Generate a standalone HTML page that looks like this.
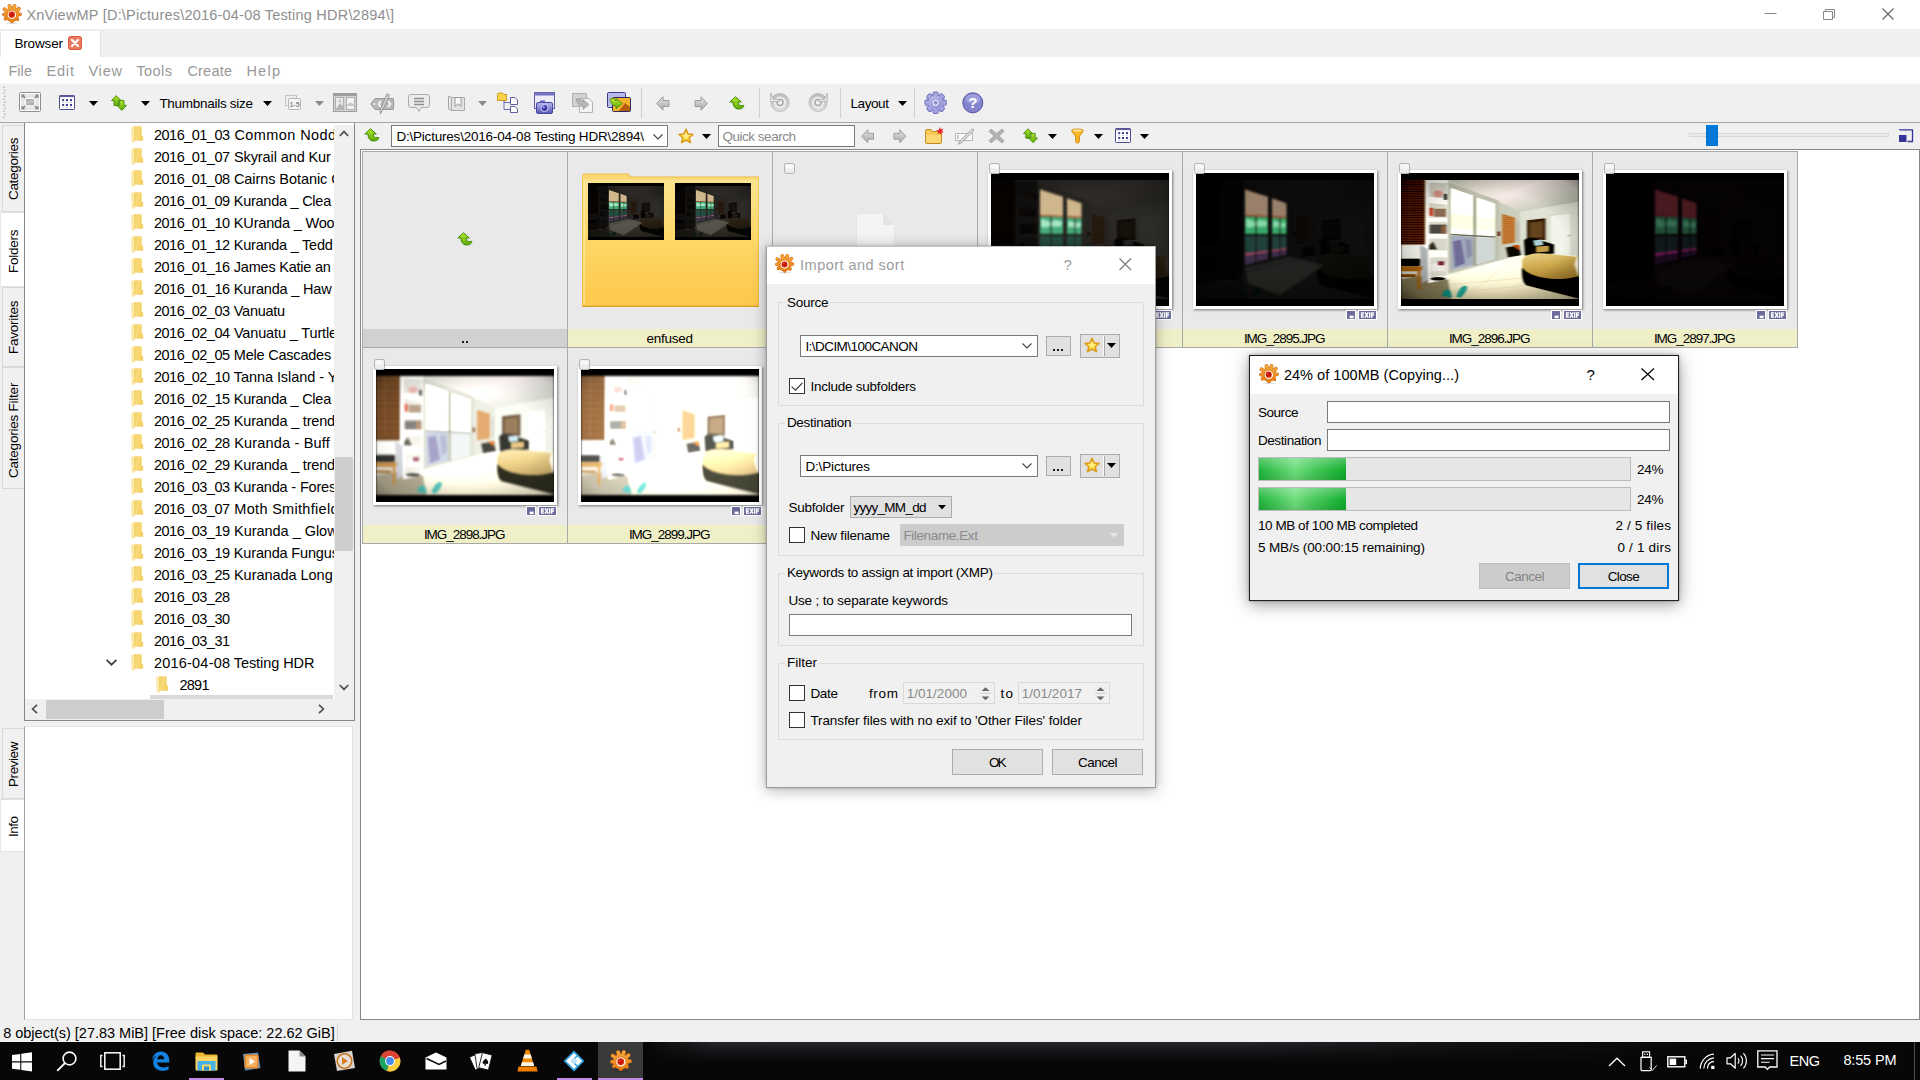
<!DOCTYPE html>
<html><head><meta charset="utf-8"><title>XnViewMP</title>
<style>
*{box-sizing:border-box;margin:0;padding:0}
html,body{width:1920px;height:1080px;overflow:hidden}
body{position:relative;background:#f0f0f0;font-family:"Liberation Sans",sans-serif;font-size:13.5px;color:#000}
.a{position:absolute}
.t{position:absolute;white-space:nowrap;line-height:1}
svg{position:absolute;overflow:visible}
.vt{position:absolute;white-space:nowrap;line-height:1;transform-origin:0 0;transform:rotate(-90deg)}

</style></head>
<body>
<svg width="0" height="0" style="position:absolute">
<defs>
<linearGradient id="gOr" gradientUnits="userSpaceOnUse" x1="0" y1="1" x2="0" y2="19"><stop offset="0" stop-color="#f8a83e"/><stop offset="1" stop-color="#e67a12"/></linearGradient>
<linearGradient id="gGr" x1="0" y1="0" x2="0" y2="1"><stop offset="0" stop-color="#b4e62e"/><stop offset="1" stop-color="#5fa80a"/></linearGradient>
<linearGradient id="gSt" x1="0" y1="0" x2="0" y2="1"><stop offset="0" stop-color="#fff27a"/><stop offset="1" stop-color="#f6b51d"/></linearGradient>
<linearGradient id="gFo" x1="0" y1="0" x2="1" y2="0.3"><stop offset="0" stop-color="#f3ce5e"/><stop offset="0.5" stop-color="#f8d977"/><stop offset="1" stop-color="#f4cf62"/></linearGradient>
<linearGradient id="gGy" x1="0" y1="0" x2="0" y2="1"><stop offset="0" stop-color="#e4e4e4"/><stop offset="1" stop-color="#a9a9a9"/></linearGradient>
<linearGradient id="gBl" x1="0" y1="0" x2="0" y2="1"><stop offset="0" stop-color="#b9b9ee"/><stop offset="1" stop-color="#5656b8"/></linearGradient>
<radialGradient id="gGear" cx="0.4" cy="0.3" r="0.8"><stop offset="0" stop-color="#c9c9f2"/><stop offset="1" stop-color="#8c8cd2"/></radialGradient>
<linearGradient id="gRot" x1="0" y1="0" x2="0" y2="1"><stop offset="0" stop-color="#bdbdbd"/><stop offset="1" stop-color="#dcdcdc"/></linearGradient>
<radialGradient id="gSt2" cx="0.5" cy="0.42" r="0.6"><stop offset="0" stop-color="#fff59a"/><stop offset="0.6" stop-color="#fde04e"/><stop offset="1" stop-color="#f8b827"/></radialGradient>
<radialGradient id="gEye" cx="0.45" cy="0.45" r="0.6"><stop offset="0" stop-color="#b80c04"/><stop offset="0.7" stop-color="#d42010"/><stop offset="1" stop-color="#ea4a18"/></radialGradient>
<linearGradient id="gGy2" x1="0" y1="0" x2="0.3" y2="1"><stop offset="0" stop-color="#9a9a9a"/><stop offset="0.5" stop-color="#c4c4c4"/><stop offset="1" stop-color="#a8a8a8"/></linearGradient>
<!-- XnView logo 20x20 -->
<symbol id="xn" viewBox="0 0 20 20">
 <ellipse cx="10" cy="19.2" rx="6.5" ry="0.8" fill="#000" opacity="0.13"/>
 <g stroke="#c86006" fill="none"><path d="M5.85 7.66L2.50 5.22" stroke-width="3.70" stroke-linecap="round"/><path d="M8.52 5.79L7.47 2.14" stroke-width="3.80" stroke-linecap="round"/><path d="M11.36 5.82L12.53 1.99" stroke-width="3.80" stroke-linecap="round"/><path d="M13.73 7.39L16.83 4.78" stroke-width="3.70" stroke-linecap="round"/><path d="M14.90 10.43L18.10 10.31" stroke-width="3.60" stroke-linecap="round"/><path d="M13.73 13.81L15.49 15.29" stroke-width="3.40" stroke-linecap="round"/><path d="M9.90 15.60L9.90 17.50" stroke-width="3.40" stroke-linecap="round"/><path d="M5.71 13.32L3.44 14.79" stroke-width="3.40" stroke-linecap="round"/><path d="M4.90 10.60L1.90 10.60" stroke-width="3.60" stroke-linecap="round"/></g>
 <circle cx="9.9" cy="10.6" r="7.2" fill="#c86006"/>
 <g stroke="url(#gOr)" fill="none"><path d="M5.85 7.66L2.50 5.22" stroke-width="2.90" stroke-linecap="round"/><path d="M8.52 5.79L7.47 2.14" stroke-width="3.00" stroke-linecap="round"/><path d="M11.36 5.82L12.53 1.99" stroke-width="3.00" stroke-linecap="round"/><path d="M13.73 7.39L16.83 4.78" stroke-width="2.90" stroke-linecap="round"/><path d="M14.90 10.43L18.10 10.31" stroke-width="2.80" stroke-linecap="round"/><path d="M13.73 13.81L15.49 15.29" stroke-width="2.60" stroke-linecap="round"/><path d="M9.90 15.60L9.90 17.50" stroke-width="2.60" stroke-linecap="round"/><path d="M5.71 13.32L3.44 14.79" stroke-width="2.60" stroke-linecap="round"/><path d="M4.90 10.60L1.90 10.60" stroke-width="2.80" stroke-linecap="round"/></g>
 <circle cx="9.9" cy="10.6" r="6.8" fill="url(#gOr)"/>
 <circle cx="9.9" cy="10.799999999999999" r="4.7" fill="#fff4e0" stroke="#d87412" stroke-width="0.8"/>
 <circle cx="9.8" cy="10.7" r="3.1" fill="url(#gEye)"/>
 <circle cx="9.0" cy="9.9" r="0.8" fill="#f26a4a" opacity="0.6"/>
</symbol>
<!-- dropdown arrow 9x5 -->
<symbol id="dd" viewBox="0 0 9 5"><path d="M0 0H9L4.5 5Z"/></symbol>
<!-- green up/down arrows 16x16 -->
<symbol id="gar" viewBox="0 0 16 16">
 <path d="M5.2 0.6L10 5.6H7.4V10.6H3V5.6H0.5Z" fill="url(#gGr)" stroke="#3d8a06" stroke-width="0.9" stroke-linejoin="round"/>
 <path d="M10.8 15.4L15.5 10.4H13V5.4H8.6V10.4H6Z" fill="url(#gGr)" stroke="#3d8a06" stroke-width="0.9" stroke-linejoin="round"/>
</symbol>
<!-- star 16x16 -->
<symbol id="star" viewBox="0 0 16 16">
 <path d="M8 1.2L10 5.9L15 6.4L11.2 9.7L12.4 14.6L8 12L3.6 14.6L4.8 9.7L1 6.4L6 5.9Z" fill="url(#gSt2)" stroke="#dd9a14" stroke-width="1.5" stroke-linejoin="round"/>
</symbol>
<!-- grid icon 16x15 -->
<symbol id="gridic" viewBox="0 0 16 15">
 <rect x="0.5" y="0.5" width="15" height="14" rx="0.8" fill="#fff" stroke="#4c4c8e"/>
 <rect x="0.5" y="0.5" width="15" height="1.6" fill="#5e5e9e"/>
 <g fill="#3e3e90"><rect x="3.2" y="4.1" width="2" height="2"/><rect x="7" y="4.1" width="2" height="2"/><rect x="11" y="4.1" width="2" height="2"/>
 <rect x="3.2" y="9" width="2" height="2"/><rect x="7" y="9" width="2" height="2"/><rect x="11" y="9" width="2" height="2"/></g>
 <g fill="#c6c6e2"><rect x="3.2" y="7.1" width="2" height="0.8"/><rect x="7" y="7.1" width="2" height="0.8"/><rect x="11" y="7.1" width="2" height="0.8"/>
 <rect x="3.2" y="12" width="2" height="0.8"/><rect x="7" y="12" width="2" height="0.8"/><rect x="11" y="12" width="2" height="0.8"/></g>
</symbol>
<!-- green up-left curved arrow 16x15 -->
<symbol id="gup" viewBox="0 0 16 15">
 <path d="M6.5 0.7 L12.3 6 H9.3 C9.3 9 10.5 10.2 13.8 9.4 C14.8 9.2 15.3 9.8 14.6 10.8 C12.4 14 4 14.8 3.9 6 H0.8 Z" fill="url(#gGr)" stroke="#3f8a05" stroke-width="1" stroke-linejoin="round"/>
</symbol>
<!-- gray left arrow 14x15 -->
<symbol id="gl" viewBox="0 0 14 15">
 <path d="M7 0.8 V4.5 H13 V10.5 H7 V14.2 L0.7 7.5 Z" fill="url(#gGy)" stroke="#9a9a9a" stroke-width="1" stroke-linejoin="round"/>
</symbol>
<symbol id="gr" viewBox="0 0 14 15">
 <path d="M7 0.8 V4.5 H1 V10.5 H7 V14.2 L13.3 7.5 Z" fill="url(#gGy)" stroke="#9a9a9a" stroke-width="1" stroke-linejoin="round"/>
</symbol>
<!-- tree folder 13x17 -->
<symbol id="tf" viewBox="0 0 13 17">
 <path d="M2.6 0.2H10.7V9.8H12.1V14.8H2.6Z" fill="url(#gFo)"/>
 <path d="M0.1 0.6L3.5 2.2V14.9L2.1 16.9L0.5 15.3Z" fill="#fbe9a8"/>
 <path d="M3.5 2.2V14.9L2.1 16.9" fill="none" stroke="#e9c65e" stroke-width="0.5"/>
</symbol>
<!-- exif badge 18x10 -->
<symbol id="exif" viewBox="0 0 18 10" preserveAspectRatio="none">
 <rect x="0" y="0" width="18" height="10" fill="#fff"/>
 <rect x="1" y="1" width="16" height="8" fill="#6a6a9a"/>
 <g fill="none" stroke="#fff" stroke-width="1.35" stroke-linecap="square">
  <path d="M5.2 2.9H3.4V7.1H5.2M3.4 5H4.9"/>
  <path d="M7 2.9L9.4 7.1M9.4 2.9L7 7.1"/>
  <path d="M11.1 2.9V7.1"/>
  <path d="M14.8 2.9H13V7.1M13 5H14.5"/>
 </g>
</symbol>
<symbol id="sav" viewBox="0 0 10 10">
 <rect x="0" y="0" width="10" height="10" fill="#fff"/>
 <rect x="1" y="1" width="8" height="8" fill="#6c6c9c"/>
 <rect x="3.6" y="5.6" width="4" height="2.6" fill="#fff"/>
</symbol>
<!-- thumb checkbox 11x11 -->
<symbol id="tchk" viewBox="0 0 11 11">
 <rect x="0.5" y="0.5" width="10" height="10" rx="1.6" fill="#ececec" stroke="#b4b4b4"/>
 <rect x="1.5" y="1.5" width="8" height="4" rx="1" fill="#f8f8f8"/>
</symbol>
<!-- chevron down (combo) 10x6 -->
<symbol id="chev" viewBox="0 0 10 6"><path d="M0.5 0.5L5 5L9.5 0.5" fill="none" stroke="#444" stroke-width="1.1"/></symbol>
</defs>
</svg>

<div class="a " style="left:0px;top:0px;width:1920px;height:29px;background:#fff"></div>
<svg class="a" style="left:2px;top:4px;" width="20" height="20"><use href="#xn" width="20" height="20"/></svg>
<div class="t " style="left:26.4px;top:8px;font-size:14.5px;letter-spacing:0.211px;color:#8e8e8e;">XnViewMP [D:\Pictures\2016-04-08 Testing HDR\2894\]</div>
<svg class="a" style="left:1760px;top:0" width="160" height="29"><path d="M4.5 13.5H16.5" stroke="#888" fill="none"/><path d="M63.5 11.5H72.5V19.5H63.5ZM65.5 11.5V9.5H74.5V17.5H72.5" stroke="#888" fill="none"/><path d="M122.5 8.5L133.5 19.5M133.5 8.5L122.5 19.5" stroke="#666" fill="none" stroke-width="1.1"/></svg>
<div class="a " style="left:0px;top:29px;width:1920px;height:28px;background:#f0f0f0"></div>
<div class="a " style="left:0px;top:29.5px;width:100.5px;height:27.5px;background:#fff;border-left:1px solid #e5e5e5;border-right:1px solid #e2e2e2;border-top:1px solid #ededed"></div>
<div class="t " style="left:14.4px;top:37px;font-size:13.5px;letter-spacing:-0.153px;color:#000;">Browser</div>
<svg class="a" style="left:68px;top:36px" width="14" height="14"><rect x="0.5" y="0.5" width="13" height="13" rx="2" fill="#ec7a62" stroke="#d7563c"/><path d="M4 4L10 10M10 4L4 10" stroke="#fff" stroke-width="2.2" stroke-linecap="round"/></svg>
<div class="a " style="left:0px;top:57px;width:1920px;height:25.5px;background:#fff"></div>
<div class="t " style="left:8.4px;top:64px;font-size:14.5px;letter-spacing:0.075px;color:#989898;">File</div>
<div class="t " style="left:46.4px;top:64px;font-size:14.5px;letter-spacing:0.867px;color:#989898;">Edit</div>
<div class="t " style="left:88.4px;top:64px;font-size:14.5px;letter-spacing:0.809px;color:#989898;">View</div>
<div class="t " style="left:136.4px;top:64px;font-size:14.5px;letter-spacing:0.435px;color:#989898;">Tools</div>
<div class="t " style="left:187.4px;top:64px;font-size:14.5px;letter-spacing:0.214px;color:#989898;">Create</div>
<div class="t " style="left:246.4px;top:64px;font-size:14.5px;letter-spacing:1.257px;color:#989898;">Help</div>
<div class="a " style="left:0px;top:82.5px;width:1920px;height:40px;background:#f0f0f0;border-top:1px solid #fafafa"></div>
<div class="a " style="left:0px;top:122px;width:1920px;height:1px;background:#a6a6a6"></div>
<svg class="a" style="left:3px;top:86px" width="4" height="33"><rect x="0" y="0.5" width="2" height="1.5" fill="#c4c4c4"/><rect x="1" y="3.5" width="2" height="1.5" fill="#c4c4c4"/><rect x="0" y="6.5" width="2" height="1.5" fill="#c4c4c4"/><rect x="1" y="9.5" width="2" height="1.5" fill="#c4c4c4"/><rect x="0" y="12.5" width="2" height="1.5" fill="#c4c4c4"/><rect x="1" y="15.5" width="2" height="1.5" fill="#c4c4c4"/><rect x="0" y="18.5" width="2" height="1.5" fill="#c4c4c4"/><rect x="1" y="21.5" width="2" height="1.5" fill="#c4c4c4"/><rect x="0" y="24.5" width="2" height="1.5" fill="#c4c4c4"/><rect x="1" y="27.5" width="2" height="1.5" fill="#c4c4c4"/><rect x="0" y="30.5" width="2" height="1.5" fill="#c4c4c4"/></svg>
<svg class="a" style="left:19px;top:92px" width="22" height="20"><rect x="0.5" y="0.5" width="21" height="19" rx="1.2" fill="#fff" stroke="#8e8e8e"/><rect x="2" y="2" width="18" height="16" fill="#e6e6e6"/><path d="M2.4 2.4H6.4L5 3.8L7.2 6L6 7.2L3.8 5L2.4 6.4ZM19.6 2.4H15.6L17 3.8L14.8 6L16 7.2L18.2 5L19.6 6.4ZM2.4 17.6H6.4L5 16.2L7.2 14L6 12.8L3.8 15L2.4 13.6ZM19.6 17.6H15.6L17 16.2L14.8 14L16 12.8L18.2 15L19.6 13.6Z" fill="#8a8a8a"/><rect x="5.8" y="5.9" width="10.6" height="8.4" fill="#fff"/><rect x="7" y="7" width="8.2" height="6.2" fill="url(#gGy2)"/></svg>
<svg class="a" style="left:59px;top:95px;" width="16" height="15"><use href="#gridic" width="16" height="15"/></svg>
<svg class="a" style="left:89px;top:101px;fill:#000" width="9" height="5"><use href="#dd" width="9" height="5"/></svg>
<svg class="a" style="left:111px;top:95px;" width="16" height="16"><use href="#gar" width="16" height="16"/></svg>
<svg class="a" style="left:141px;top:101px;fill:#000" width="9" height="5"><use href="#dd" width="9" height="5"/></svg>
<div class="t " style="left:159.4px;top:97px;font-size:13.5px;letter-spacing:-0.282px;color:#000;">Thumbnails size</div>
<svg class="a" style="left:263px;top:101px;fill:#000" width="9" height="5"><use href="#dd" width="9" height="5"/></svg>
<svg class="a" style="left:285px;top:95px" width="17" height="16"><rect x="0.5" y="0.5" width="11" height="10" fill="#efefef" stroke="#c4c4c4"/><rect x="3.5" y="3.5" width="12" height="11" rx="1" fill="#f6f6f6" stroke="#b5b5b5"/><text x="9.5" y="12" font-size="7" font-family="Liberation Sans" font-weight="bold" fill="#8c8c8c" text-anchor="middle">1-5</text></svg>
<svg class="a" style="left:315px;top:101px;fill:#8a8a8a" width="9" height="5"><use href="#dd" width="9" height="5"/></svg>
<svg class="a" style="left:333px;top:93px" width="24" height="19"><rect x="0.5" y="0.5" width="23" height="18" fill="#d4d4d4" stroke="#9c9c9c"/><rect x="0.5" y="0.5" width="23" height="2.5" fill="#9e9e9e"/><rect x="2.5" y="4.5" width="8" height="12" fill="#ececec" stroke="#b0b0b0"/><rect x="13.5" y="4.5" width="8" height="12" fill="#f4f4f4" stroke="#b0b0b0"/><path d="M3 16L7 10L10 13V16Z" fill="#b4b4b4"/><circle cx="7" cy="8" r="1.5" fill="#c4c4c4"/><path d="M14 12Q17.5 7 21 12V13H14Z" fill="#c9c9c9"/></svg>
<svg class="a" style="left:370px;top:93px" width="25" height="22"><path d="M5 5.5H23.5V16.5H5L0.8 11Z" fill="#b9b9b9" stroke="#9b9b9b"/><circle cx="4.5" cy="11" r="1" fill="#f0f0f0"/><path d="M11 8L8.5 11L11 14M18 8L20.5 11L18 14" stroke="#fff" stroke-width="1.4" fill="none"/><path d="M17 0.8L19.6 2.2L12.4 17.6L10.4 20.8L10 17Z" fill="#cfcfcf" stroke="#8a8a8a" stroke-width="0.8"/></svg>
<svg class="a" style="left:408px;top:94px" width="22" height="19"><path d="M3 0.5H19A2.5 2.5 0 0 1 21.5 3V11A2.5 2.5 0 0 1 19 13.5H13L10.8 17.5L8.6 13.5H3A2.5 2.5 0 0 1 0.5 11V3A2.5 2.5 0 0 1 3 0.5Z" fill="#ececec" stroke="#acacac"/><path d="M6 4.5H16M6 7.5H16M6 10.5H16" stroke="#8f8f8f" stroke-width="1.4"/></svg>
<svg class="a" style="left:448px;top:95px" width="17" height="16"><path d="M0.5 1L3.5 2.5V15.5L0.5 14ZM3.5 2.5H16.5V15.5H3.5Z" fill="#e3e3e3" stroke="#aaa"/><path d="M7 2.5H13V11.5L10 8.8L7 11.5Z" fill="#fafafa" stroke="#999"/></svg>
<svg class="a" style="left:478px;top:101px;fill:#8a8a8a" width="9" height="5"><use href="#dd" width="9" height="5"/></svg>
<svg class="a" style="left:497px;top:92px" width="22" height="21"><path d="M0.5 2.5A1.5 1.5 0 0 1 2 1H5.5L7 2.5H9.5V8.5H0.5Z" fill="#fbd24a" stroke="#c99a1c"/><path d="M7 8.5V17.5H13M7 10.5H13" stroke="#6f6fae" fill="none"/><path d="M13.5 5.5H18L20.5 8V12.5H13.5Z" fill="#fff" stroke="#5f5fa0"/><path d="M13.5 14.5H18L20.5 17V20.5H13.5Z" fill="#fff" stroke="#5f5fa0"/></svg>
<svg class="a" style="left:534px;top:92px" width="22" height="22"><rect x="0.5" y="0.5" width="20" height="16" fill="#ececf6" stroke="#5c5ca8"/><rect x="0.5" y="0.5" width="20" height="3" fill="#7474c4"/><rect x="2.5" y="10.5" width="16" height="11" rx="1.5" fill="url(#gBl)" stroke="#4747a0"/><rect x="6" y="8.5" width="5" height="2.5" fill="#5a5ab4"/><circle cx="10.5" cy="16" r="3.6" fill="#3838a8" stroke="#d8d8f6"/><circle cx="9.6" cy="15" r="1.2" fill="#9ea0f4"/></svg>
<svg class="a" style="left:572px;top:93px" width="22" height="20"><rect x="0.5" y="0.5" width="14" height="13" fill="#d2d2d2" stroke="#b0b0b0"/><path d="M7.5 5.5H17L20.5 9V19.5H7.5Z" fill="#f4f4f4" stroke="#b4b4b4"/><path d="M4 6C8 5 11 7 11 9V6.5L17 11.5L11 16.5V13.5C8 13.5 5 11 4 6Z" fill="#b4b4b4" stroke="#9a9a9a" stroke-width="0.7"/></svg>
<svg class="a" style="left:607px;top:92px" width="25" height="21"><rect x="0.5" y="0.5" width="18" height="15" rx="1" fill="#b9b9ee" stroke="#3c3c8c"/><rect x="5.5" y="5.5" width="18" height="14" rx="1" fill="#f4b22c" stroke="#2c2c5c"/><path d="M12 19L18 11L23 15V19Z" fill="#b45c0a"/><path d="M3 7C6 5.5 9 7 9 9V6.5L15.5 11.5L9 16.5V14C6 14 4 12 3 7Z" fill="url(#gGr)" stroke="#3f8a05" stroke-width="0.8"/></svg>
<div class="a " style="left:641px;top:88px;width:1px;height:30px;background:#cfcfcf"></div>
<svg class="a" style="left:656px;top:96px;" width="14" height="15"><use href="#gl" width="14" height="15"/></svg>
<svg class="a" style="left:694px;top:96px;" width="14" height="15"><use href="#gr" width="14" height="15"/></svg>
<svg class="a" style="left:729px;top:96px;" width="16" height="15"><use href="#gup" width="16" height="15"/></svg>
<div class="a " style="left:759px;top:88px;width:1px;height:30px;background:#cfcfcf"></div>
<svg class="a" style="left:770px;top:92px" width="20" height="20"><circle cx="10" cy="10.5" r="7.6" fill="#ececec" stroke="url(#gRot)" stroke-width="3"/><circle cx="10" cy="10.5" r="9.1" fill="none" stroke="#b0b0b0" stroke-width="0.7"/><circle cx="10" cy="10.5" r="3" fill="#f4f4f4" stroke="#a8a8a8" stroke-width="1.5"/><path d="M0.8 1V9.6H9.6V7.4H3.4Z" fill="#ededed" stroke="#adadad" stroke-width="0.9"/></svg>
<svg class="a" style="left:808px;top:92px" width="20" height="20"><circle cx="10" cy="10.5" r="7.6" fill="#ececec" stroke="url(#gRot)" stroke-width="3"/><circle cx="10" cy="10.5" r="9.1" fill="none" stroke="#b0b0b0" stroke-width="0.7"/><circle cx="10" cy="10.5" r="3" fill="#f4f4f4" stroke="#a8a8a8" stroke-width="1.5"/><path d="M19.2 1V9.6H10.4V7.4H16.6Z" fill="#ededed" stroke="#adadad" stroke-width="0.9"/></svg>
<div class="a " style="left:840px;top:88px;width:1px;height:30px;background:#cfcfcf"></div>
<div class="t " style="left:850.4px;top:97px;font-size:13.5px;letter-spacing:-0.389px;color:#000;">Layout</div>
<svg class="a" style="left:898px;top:101px;fill:#000" width="9" height="5"><use href="#dd" width="9" height="5"/></svg>
<div class="a " style="left:914px;top:88px;width:1px;height:30px;background:#cfcfcf"></div>
<svg class="a" style="left:925px;top:92px" width="22" height="22"><g transform="translate(10.6,10.7)"><g fill="#6a6ab8" stroke="#6a6ab8" stroke-width="1.6"><rect x="-2.3" y="-10.4" width="4.6" height="5" rx="1.2" transform="rotate(0)"/><rect x="-2.3" y="-10.4" width="4.6" height="5" rx="1.2" transform="rotate(45)"/><rect x="-2.3" y="-10.4" width="4.6" height="5" rx="1.2" transform="rotate(90)"/><rect x="-2.3" y="-10.4" width="4.6" height="5" rx="1.2" transform="rotate(135)"/><rect x="-2.3" y="-10.4" width="4.6" height="5" rx="1.2" transform="rotate(180)"/><rect x="-2.3" y="-10.4" width="4.6" height="5" rx="1.2" transform="rotate(225)"/><rect x="-2.3" y="-10.4" width="4.6" height="5" rx="1.2" transform="rotate(270)"/><rect x="-2.3" y="-10.4" width="4.6" height="5" rx="1.2" transform="rotate(315)"/><circle r="7.4"/></g><g fill="#a4a4e0"><rect x="-2.3" y="-10.4" width="4.6" height="5" rx="1.2" transform="rotate(0)"/><rect x="-2.3" y="-10.4" width="4.6" height="5" rx="1.2" transform="rotate(45)"/><rect x="-2.3" y="-10.4" width="4.6" height="5" rx="1.2" transform="rotate(90)"/><rect x="-2.3" y="-10.4" width="4.6" height="5" rx="1.2" transform="rotate(135)"/><rect x="-2.3" y="-10.4" width="4.6" height="5" rx="1.2" transform="rotate(180)"/><rect x="-2.3" y="-10.4" width="4.6" height="5" rx="1.2" transform="rotate(225)"/><rect x="-2.3" y="-10.4" width="4.6" height="5" rx="1.2" transform="rotate(270)"/><rect x="-2.3" y="-10.4" width="4.6" height="5" rx="1.2" transform="rotate(315)"/><circle r="7.4"/></g><circle r="6.6" fill="url(#gGear)"/><circle r="3.9" fill="#eeeefa" stroke="#7c7cc4" stroke-width="0.9"/><circle r="1.7" fill="#9a9ad8" stroke="#7070bc" stroke-width="0.6"/></g></svg>
<svg class="a" style="left:962px;top:92px" width="22" height="22"><circle cx="10.8" cy="10.8" r="10" fill="#8484cc" stroke="#5050a8"/><ellipse cx="10.8" cy="7" rx="7.5" ry="5" fill="#a9a9e2" opacity="0.7"/><text x="10.8" y="16" font-size="15" font-weight="bold" font-family="Liberation Sans" fill="#fff" text-anchor="middle">?</text></svg>
<svg class="a" style="left:364px;top:128px;" width="16" height="15"><use href="#gup" width="16" height="15"/></svg>
<div class="a " style="left:391px;top:125px;width:277px;height:22px;background:#fff;border:1px solid #7a7a7a"></div>
<div class="t " style="left:396.4px;top:130px;font-size:13.5px;letter-spacing:-0.206px;color:#000;">D:\Pictures\2016-04-08 Testing HDR\2894\</div>
<svg class="a" style="left:653px;top:134px;" width="10" height="6"><use href="#chev" width="10" height="6"/></svg>
<svg class="a" style="left:677.5px;top:127.5px;" width="16" height="16"><use href="#star" width="16" height="16"/></svg>
<svg class="a" style="left:702px;top:134px;fill:#000" width="9" height="5"><use href="#dd" width="9" height="5"/></svg>
<div class="a " style="left:718px;top:125px;width:137px;height:22px;background:#fff;border:1px solid #7a7a7a"></div>
<div class="t " style="left:722.4px;top:130px;font-size:13.5px;letter-spacing:-0.471px;color:#8a8a8a;">Quick search</div>
<svg class="a" style="left:861px;top:129px;" width="13.5" height="14.5"><use href="#gl" width="13.5" height="14.5"/></svg>
<svg class="a" style="left:893px;top:129px;" width="13.5" height="14.5"><use href="#gr" width="13.5" height="14.5"/></svg>
<svg class="a" style="left:925px;top:127px" width="19" height="17"><path d="M0.5 4A1.5 1.5 0 0 1 2 2.5H6L7.5 4.5H15.5A1 1 0 0 1 16.5 5.5V15A1.5 1.5 0 0 1 15 16.5H2A1.5 1.5 0 0 1 0.5 15Z" fill="#f7c956" stroke="#c08a28"/><path d="M1 8H16V15.5H1Z" fill="#fbd873"/><path d="M15 0L15.9 2.6L18.5 1.5L17 3.9L19 5.3L16.3 5.4L16.2 8L14.6 5.9L12.3 7L13.3 4.6L11.2 3.1L13.8 3Z" fill="#e8202a"/></svg>
<svg class="a" style="left:955px;top:128px" width="20" height="17"><rect x="0.5" y="5.5" width="17" height="7" fill="#fafafa" stroke="#b6b6b6"/><path d="M3 7V11" stroke="#999"/><path d="M17.4 0.6L19.3 2.2L6.8 14.6L3.3 16.2L4.9 13Z" fill="#d9d9d9" stroke="#a2a2a2" stroke-width="0.9"/></svg>
<svg class="a" style="left:988px;top:128px" width="17" height="16"><path d="M3 1L8.5 5.5L14 1L16 3.5L11 8L16 12.5L14 15L8.5 10.5L3 15L1 12.5L6 8L1 3.5Z" fill="#b4b4b4" stroke="#a0a0a0" stroke-width="0.8" stroke-linejoin="round"/></svg>
<svg class="a" style="left:1023px;top:128px;" width="15" height="15.5"><use href="#gar" width="15" height="15.5"/></svg>
<svg class="a" style="left:1048px;top:134px;fill:#000" width="9" height="5"><use href="#dd" width="9" height="5"/></svg>
<svg class="a" style="left:1070.5px;top:128px" width="13" height="16"><path d="M0.7 2.5C0.7 0.5 12.3 0.5 12.3 2.5C12.3 4 8.3 7.5 8.3 9V13.5C8.3 15.5 4.7 15.5 4.7 13.5V9C4.7 7.5 0.7 4 0.7 2.5Z" fill="#f9b526" stroke="#d48a10"/><ellipse cx="6.5" cy="2.5" rx="4.6" ry="1.1" fill="#fde9a4"/></svg>
<svg class="a" style="left:1094px;top:134px;fill:#000" width="9" height="5"><use href="#dd" width="9" height="5"/></svg>
<svg class="a" style="left:1115px;top:128px;" width="16" height="15"><use href="#gridic" width="16" height="15"/></svg>
<svg class="a" style="left:1140px;top:134px;fill:#000" width="9" height="5"><use href="#dd" width="9" height="5"/></svg>
<div class="a " style="left:1689px;top:133px;width:200px;height:4px;background:#e7eaea;border:1px solid #d6d6d6"></div>
<div class="a " style="left:1706px;top:125px;width:12px;height:21px;background:#0078d7"></div>
<svg class="a" style="left:1898px;top:129px" width="16" height="14"><path d="M1.5 1V0.8H14.5V12.5H9.5" fill="none" stroke="#333399" stroke-width="1.3"/><rect x="1" y="6" width="7.5" height="7" fill="#333399"/></svg>
<div class="t " style="left:3.1999999999999997px;top:1026px;font-size:14.5px;letter-spacing:-0.009px;color:#000;">8 object(s) [27.83 MiB] [Free disk space: 22.62 GiB]</div>
<div class="a " style="left:337px;top:1023px;width:1px;height:19px;background:#d7d7d7"></div>
<div class="a " style="left:2px;top:125px;width:22px;height:87px;background:#f0f0f0;border:1px solid #d9d9d9;border-right:none"></div><div class="vt" style="left:7.00px;top:199.6px;font-size:13.5px;letter-spacing:-0.322px">Categories</div>
<div class="a " style="left:0px;top:212px;width:25px;height:75px;background:#fff;border-top:1px solid #e2e2e2;border-bottom:1px solid #e2e2e2;border-left:1px solid #e8e8e8"></div><div class="vt" style="left:7.00px;top:272.6px;font-size:13.5px;letter-spacing:-0.269px">Folders</div>
<div class="a " style="left:2px;top:287px;width:22px;height:80px;background:#f0f0f0;border:1px solid #d9d9d9;border-right:none"></div><div class="vt" style="left:7.00px;top:354.1px;font-size:13.5px;letter-spacing:-0.266px">Favorites</div>
<div class="a " style="left:2px;top:367px;width:22px;height:122px;background:#f0f0f0;border:1px solid #d9d9d9;border-right:none"></div><div class="vt" style="left:7.00px;top:477.6px;font-size:13.5px;letter-spacing:-0.228px">Categories Filter</div>
<div class="a " style="left:2px;top:728px;width:22px;height:71px;background:#f0f0f0;border:1px solid #d9d9d9;border-right:none"></div><div class="vt" style="left:7.00px;top:786.6px;font-size:13.5px;letter-spacing:-0.436px">Preview</div>
<div class="a " style="left:0px;top:799px;width:25px;height:53px;background:#fff;border-top:1px solid #e2e2e2;border-bottom:1px solid #e2e2e2;border-left:1px solid #e8e8e8"></div><div class="vt" style="left:7.00px;top:837.1px;font-size:13.5px;letter-spacing:-0.544px">Info</div>
<div class="a " style="left:24px;top:123px;width:331px;height:598px;background:#fff;border:1px solid #828790;border-top:none"></div>
<div class="a " style="left:25px;top:125px;width:308.5px;height:574px;overflow:hidden"><svg class="a" style="left:106px;top:1px" width="13" height="17"><use href="#tf" width="13" height="17"/></svg><div class="t" style="left:129px;top:2.53px;font-size:14.5px"><span style="display:inline-block;width:76px;letter-spacing:-0.517px">2016_01_03</span><span style="letter-spacing:0.412px"> Common Nodding</span></div><svg class="a" style="left:106px;top:23px" width="13" height="17"><use href="#tf" width="13" height="17"/></svg><div class="t" style="left:129px;top:24.53px;font-size:14.5px"><span style="display:inline-block;width:76px;letter-spacing:-0.517px">2016_01_07</span><span style="letter-spacing:-0.097px"> Skyrail and Kur</span></div><svg class="a" style="left:106px;top:45px" width="13" height="17"><use href="#tf" width="13" height="17"/></svg><div class="t" style="left:129px;top:46.53px;font-size:14.5px"><span style="display:inline-block;width:76px;letter-spacing:-0.517px">2016_01_08</span><span style="letter-spacing:-0.073px"> Cairns Botanic Gardens</span></div><svg class="a" style="left:106px;top:67px" width="13" height="17"><use href="#tf" width="13" height="17"/></svg><div class="t" style="left:129px;top:68.53px;font-size:14.5px"><span style="display:inline-block;width:76px;letter-spacing:-0.517px">2016_01_09</span><span style="letter-spacing:-0.257px"> Kuranda _ Clea</span></div><svg class="a" style="left:106px;top:89px" width="13" height="17"><use href="#tf" width="13" height="17"/></svg><div class="t" style="left:129px;top:90.53px;font-size:14.5px"><span style="display:inline-block;width:76px;letter-spacing:-0.517px">2016_01_10</span><span style="letter-spacing:-0.173px"> KUranda _ Woompoo</span></div><svg class="a" style="left:106px;top:111px" width="13" height="17"><use href="#tf" width="13" height="17"/></svg><div class="t" style="left:129px;top:112.53px;font-size:14.5px"><span style="display:inline-block;width:76px;letter-spacing:-0.517px">2016_01_12</span><span style="letter-spacing:-0.240px"> Kuranda _ Tedd</span></div><svg class="a" style="left:106px;top:133px" width="13" height="17"><use href="#tf" width="13" height="17"/></svg><div class="t" style="left:129px;top:134.53px;font-size:14.5px"><span style="display:inline-block;width:76px;letter-spacing:-0.517px">2016_01_16</span><span style="letter-spacing:-0.220px"> James Katie an</span></div><svg class="a" style="left:106px;top:155px" width="13" height="17"><use href="#tf" width="13" height="17"/></svg><div class="t" style="left:129px;top:156.53px;font-size:14.5px"><span style="display:inline-block;width:76px;letter-spacing:-0.517px">2016_01_16</span><span style="letter-spacing:-0.176px"> Kuranda _ Haw</span></div><svg class="a" style="left:106px;top:177px" width="13" height="17"><use href="#tf" width="13" height="17"/></svg><div class="t" style="left:129px;top:178.53px;font-size:14.5px"><span style="display:inline-block;width:76px;letter-spacing:-0.517px">2016_02_03</span><span style="letter-spacing:-0.255px"> Vanuatu</span></div><svg class="a" style="left:106px;top:199px" width="13" height="17"><use href="#tf" width="13" height="17"/></svg><div class="t" style="left:129px;top:200.53px;font-size:14.5px"><span style="display:inline-block;width:76px;letter-spacing:-0.517px">2016_02_04</span><span style="letter-spacing:-0.140px"> Vanuatu _ Turtles</span></div><svg class="a" style="left:106px;top:221px" width="13" height="17"><use href="#tf" width="13" height="17"/></svg><div class="t" style="left:129px;top:222.53px;font-size:14.5px"><span style="display:inline-block;width:76px;letter-spacing:-0.517px">2016_02_05</span><span style="letter-spacing:-0.213px"> Mele Cascades</span></div><svg class="a" style="left:106px;top:243px" width="13" height="17"><use href="#tf" width="13" height="17"/></svg><div class="t" style="left:129px;top:244.53px;font-size:14.5px"><span style="display:inline-block;width:76px;letter-spacing:-0.517px">2016_02_10</span><span style="letter-spacing:-0.061px"> Tanna Island - Yasur</span></div><svg class="a" style="left:106px;top:265px" width="13" height="17"><use href="#tf" width="13" height="17"/></svg><div class="t" style="left:129px;top:266.53px;font-size:14.5px"><span style="display:inline-block;width:76px;letter-spacing:-0.517px">2016_02_15</span><span style="letter-spacing:-0.257px"> Kuranda _ Clea</span></div><svg class="a" style="left:106px;top:287px" width="13" height="17"><use href="#tf" width="13" height="17"/></svg><div class="t" style="left:129px;top:288.53px;font-size:14.5px"><span style="display:inline-block;width:76px;letter-spacing:-0.517px">2016_02_25</span><span style="letter-spacing:-0.191px"> Kuranda _ trend</span></div><svg class="a" style="left:106px;top:309px" width="13" height="17"><use href="#tf" width="13" height="17"/></svg><div class="t" style="left:129px;top:310.53px;font-size:14.5px"><span style="display:inline-block;width:76px;letter-spacing:-0.517px">2016_02_28</span><span style="letter-spacing:0.173px"> Kuranda - Buff</span></div><svg class="a" style="left:106px;top:331px" width="13" height="17"><use href="#tf" width="13" height="17"/></svg><div class="t" style="left:129px;top:332.53px;font-size:14.5px"><span style="display:inline-block;width:76px;letter-spacing:-0.517px">2016_02_29</span><span style="letter-spacing:-0.191px"> Kuranda _ trend</span></div><svg class="a" style="left:106px;top:353px" width="13" height="17"><use href="#tf" width="13" height="17"/></svg><div class="t" style="left:129px;top:354.53px;font-size:14.5px"><span style="display:inline-block;width:76px;letter-spacing:-0.517px">2016_03_03</span><span style="letter-spacing:-0.169px"> Kuranda - Forest</span></div><svg class="a" style="left:106px;top:375px" width="13" height="17"><use href="#tf" width="13" height="17"/></svg><div class="t" style="left:129px;top:376.53px;font-size:14.5px"><span style="display:inline-block;width:76px;letter-spacing:-0.517px">2016_03_07</span><span style="letter-spacing:0.307px"> Moth Smithfield</span></div><svg class="a" style="left:106px;top:397px" width="13" height="17"><use href="#tf" width="13" height="17"/></svg><div class="t" style="left:129px;top:398.53px;font-size:14.5px"><span style="display:inline-block;width:76px;letter-spacing:-0.517px">2016_03_19</span><span style="letter-spacing:-0.027px"> Kuranda _ Glow worm</span></div><svg class="a" style="left:106px;top:419px" width="13" height="17"><use href="#tf" width="13" height="17"/></svg><div class="t" style="left:129px;top:420.53px;font-size:14.5px"><span style="display:inline-block;width:76px;letter-spacing:-0.517px">2016_03_19</span><span style="letter-spacing:-0.169px"> Kuranda Fungus</span></div><svg class="a" style="left:106px;top:441px" width="13" height="17"><use href="#tf" width="13" height="17"/></svg><div class="t" style="left:129px;top:442.53px;font-size:14.5px"><span style="display:inline-block;width:76px;letter-spacing:-0.517px">2016_03_25</span><span style="letter-spacing:-0.039px"> Kuranada Long</span></div><svg class="a" style="left:106px;top:463px" width="13" height="17"><use href="#tf" width="13" height="17"/></svg><div class="t" style="left:129px;top:464.53px;font-size:14.5px"><span style="display:inline-block;width:76px;letter-spacing:-0.517px">2016_03_28</span></div><svg class="a" style="left:106px;top:485px" width="13" height="17"><use href="#tf" width="13" height="17"/></svg><div class="t" style="left:129px;top:486.53px;font-size:14.5px"><span style="display:inline-block;width:76px;letter-spacing:-0.517px">2016_03_30</span></div><svg class="a" style="left:106px;top:507px" width="13" height="17"><use href="#tf" width="13" height="17"/></svg><div class="t" style="left:129px;top:508.53px;font-size:14.5px"><span style="display:inline-block;width:76px;letter-spacing:-0.517px">2016_03_31</span></div><svg class="a" style="left:106px;top:529px" width="13" height="17"><use href="#tf" width="13" height="17"/></svg><div class="t" style="left:129px;top:530.53px;font-size:14.5px"><span style="display:inline-block;width:76px;letter-spacing:0.203px">2016-04-08</span><span style="letter-spacing:-0.060px"> Testing HDR</span></div><svg class="a" style="left:131px;top:551px" width="13" height="17"><use href="#tf" width="13" height="17"/></svg><div class="t" style="left:154.5px;top:552.53px;font-size:14.5px;letter-spacing:-0.755px">2891</div></div>
<svg class="a" style="left:106px;top:659px" width="11" height="7"><path d="M0.6 0.8L5.5 5.7L10.4 0.8" fill="none" stroke="#404040" stroke-width="1.7"/></svg>
<div class="a " style="left:334px;top:125px;width:20px;height:574px;background:#f0f0f0"></div>
<svg class="a" style="left:339px;top:130px" width="10" height="7"><path d="M0.8 6L5 1.6L9.2 6" fill="none" stroke="#505050" stroke-width="1.7"/></svg>
<svg class="a" style="left:339px;top:684px" width="10" height="7"><path d="M0.8 1L5 5.4L9.2 1" fill="none" stroke="#505050" stroke-width="1.7"/></svg>
<div class="a " style="left:335px;top:457px;width:18px;height:94px;background:#cdcdcd"></div>
<div class="a " style="left:25px;top:699px;width:329px;height:21px;background:#f0f0f0"></div>
<div class="a " style="left:46px;top:700px;width:118px;height:19px;background:#cdcdcd"></div>
<svg class="a" style="left:31px;top:704px" width="7" height="10"><path d="M6 0.8L1.6 5L6 9.2" fill="none" stroke="#505050" stroke-width="1.7"/></svg>
<svg class="a" style="left:318px;top:704px" width="7" height="10"><path d="M1 0.8L5.4 5L1 9.2" fill="none" stroke="#505050" stroke-width="1.7"/></svg>
<div class="a " style="left:150px;top:695px;width:183px;height:4px;background:#d9d9d9"></div>
<div class="a " style="left:24px;top:726px;width:329px;height:294px;background:#fff;border:1px solid #e3e3e3;border-left:1px solid #a0a0a0"></div>
<div class="a " style="left:360px;top:149px;width:1560px;height:871px;background:#fff;border:1px solid #828790"></div>
<svg width="0" height="0" style="position:absolute"><defs>
<filter id="blur1" x="-5%" y="-5%" width="110%" height="110%" color-interpolation-filters="sRGB"><feGaussianBlur stdDeviation="0.85"/></filter>
<filter id="fN" color-interpolation-filters="sRGB"><feGaussianBlur stdDeviation="0.8"/><feComponentTransfer><feFuncR type="linear" slope="1.3" intercept="-0.17"/><feFuncG type="linear" slope="1.3" intercept="-0.17"/><feFuncB type="linear" slope="1.3" intercept="-0.18"/></feComponentTransfer></filter>
<filter id="fD1" color-interpolation-filters="sRGB"><feGaussianBlur stdDeviation="0.8"/><feComponentTransfer><feFuncR type="linear" slope="0.21"/><feFuncG type="linear" slope="0.2"/><feFuncB type="linear" slope="0.19"/></feComponentTransfer></filter>
<filter id="fD2" color-interpolation-filters="sRGB"><feGaussianBlur stdDeviation="0.8"/><feComponentTransfer><feFuncR type="linear" slope="0.065"/><feFuncG type="linear" slope="0.065"/><feFuncB type="linear" slope="0.07"/></feComponentTransfer></filter>
<filter id="fD3" color-interpolation-filters="sRGB"><feGaussianBlur stdDeviation="0.8"/><feComponentTransfer><feFuncR type="linear" slope="0.03"/><feFuncG type="linear" slope="0.015"/><feFuncB type="linear" slope="0.025"/></feComponentTransfer></filter>
<filter id="fB1" color-interpolation-filters="sRGB"><feGaussianBlur stdDeviation="0.9"/><feComponentTransfer><feFuncR type="gamma" exponent="0.78" amplitude="1.18"/><feFuncG type="gamma" exponent="0.78" amplitude="1.18"/><feFuncB type="gamma" exponent="0.78" amplitude="1.18"/></feComponentTransfer></filter>
<filter id="fB2" color-interpolation-filters="sRGB"><feGaussianBlur stdDeviation="1"/><feComponentTransfer><feFuncR type="gamma" exponent="0.6" amplitude="1.3"/><feFuncG type="gamma" exponent="0.6" amplitude="1.3"/><feFuncB type="gamma" exponent="0.6" amplitude="1.3"/></feComponentTransfer></filter>
<radialGradient id="vig" cx="0.52" cy="0.5" r="0.78"><stop offset="0.5" stop-color="#000" stop-opacity="0"/><stop offset="0.8" stop-color="#000" stop-opacity="0.22"/><stop offset="1" stop-color="#000" stop-opacity="0.6"/></radialGradient>
<linearGradient id="ceil" x1="0" y1="0" x2="1" y2="0.6"><stop offset="0" stop-color="#b9baae"/><stop offset="0.55" stop-color="#e0d6d4"/><stop offset="1" stop-color="#b4b8ae"/></linearGradient>
<radialGradient id="floorg" cx="0.45" cy="0.1" r="0.9"><stop offset="0" stop-color="#fbfaf0"/><stop offset="0.6" stop-color="#e6dfc8"/><stop offset="1" stop-color="#c9c0a4"/></radialGradient>
<linearGradient id="bedg" x1="0" y1="0" x2="0.3" y2="1"><stop offset="0" stop-color="#d6c48e"/><stop offset="0.5" stop-color="#c2a662"/><stop offset="1" stop-color="#a4864a"/></linearGradient>
<pattern id="slat" width="4" height="2.4" patternUnits="userSpaceOnUse"><rect width="4" height="2.4" fill="#643818"/><rect y="1.6" width="4" height="0.8" fill="#3a200e"/></pattern>
<pattern id="slat2" width="4" height="2" patternUnits="userSpaceOnUse"><rect width="4" height="2" fill="#c28a54"/><rect y="1.3" width="4" height="0.7" fill="#9c6232"/></pattern>
<g id="room">
 <rect x="0" y="0" width="178" height="120" fill="#c6c8be"/>
 <!-- ceiling -->
 <path d="M47 0H178V22L119 32Z" fill="url(#ceil)"/>
 <!-- back wall -->
 <path d="M119 32L178 22V80H119Z" fill="#cdd0c6"/>
 <path d="M149 36L170 33V77H149Z" fill="#dcdfd8"/><path d="M149 36L170 33V77H149Z" fill="none" stroke="#b4b8b0" stroke-width="0.5"/>
 <circle cx="168" cy="56" r="0.9" fill="#888"/>
 <!-- left wall beyond door -->
 <path d="M96 21L119 32V78L96 82Z" fill="#bfc0b4"/>
 <!-- floor -->
 <path d="M46 96L119 76H178V120H0V104Z" fill="url(#floorg)"/>
 <path d="M0 100L46 93L50 120H0Z" fill="#8a826a"/>
 <path d="M62 120L112 80M104 120L140 84M46 106L150 96M50 114L178 101" stroke="#c9c2a8" stroke-width="0.5" fill="none"/>
 <!-- left blinds -->
 <rect x="0" y="0" width="24" height="65" fill="url(#slat)"/>
 <path d="M9 0V62" stroke="#a88868" stroke-width="0.4" stroke-dasharray="1 1"/>
 <rect x="0" y="66" width="23" height="13" fill="#dededa"/>
 <path d="M19 66L28 70V100L21 104Z" fill="#a9acb0"/>
 <rect x="0" y="79.5" width="19" height="7.5" rx="1.5" fill="#1c1c1a"/>
 <path d="M0 87H21V91H19.5V110H16.5V92H0Z" fill="#a56e2e"/><path d="M0 95H15V98H0Z" fill="#8a5a24"/>
 <!-- shelf -->
 <path d="M24 0H47V100L27 104V70L24 68Z" fill="#e8e8e4"/>
 <path d="M28 3H46V19L28 17ZM28 23L46 25V38H28ZM28 42H46V54H28ZM28 59H46V71H28ZM29 78H46V96L29 98Z" fill="#c9c7be"/>
 <ellipse cx="37" cy="14" rx="4.5" ry="3.5" fill="#c8948c"/><rect x="43" y="14" width="3" height="6" fill="#3a3a38"/>
 <rect x="28.5" y="28" width="3.5" height="8" fill="#b84a38"/><rect x="33" y="29" width="12" height="8" fill="#8a7460"/>
 <rect x="28.5" y="45" width="17" height="9" fill="#5a5854"/><rect x="40" y="46" width="5" height="8" fill="#8a6a50"/>
 <path d="M28 66L32 62L36 70H28Z" fill="#46423a"/>
 <path d="M30 86L38 82L45 85V92H30Z" fill="#d8d4d0"/><rect x="37" y="82" width="6" height="4" fill="#7a3a48"/>
 <ellipse cx="37" cy="99.5" rx="7.5" ry="1.8" fill="#2a2824"/>
 <!-- door frame -->
 <path d="M47 2L98 21V80L47 94Z" fill="#b4b4a8"/>
 <!-- 2nd blinds -->
 <path d="M101 34L114 38V63L101 65Z" fill="url(#slat2)"/>
 <rect x="96.5" y="52" width="2.6" height="4.5" fill="#6a3420"/>
 <path d="M117 42V62" stroke="#9a9a90" stroke-width="1.2"/>
 <!-- framed picture -->
 <path d="M126 40.5L144.5 38.5V60.5L126 60.5Z" fill="#4a3626"/><path d="M128.6 43L142 41.6V58L128.6 58Z" fill="#6e563a"/>
 <!-- chair small -->
 <path d="M105 68L118 66L120 76L107 78Z" fill="#2a2824"/><path d="M111 66L118.5 65.5L118 71Z" fill="#b4561e"/>
 <path d="M106 78L105 84M119 76L120 82" stroke="#d0d0c8" stroke-width="0.7"/>
 <!-- armchair -->
 <path d="M123 61C126 57 134 58 137 60L153 65V74L124 76.5Z" fill="#1d1d19"/>
 <path d="M135 67L148 66.2V72L135 73Z" fill="#b89a5a"/><path d="M132 61L141 60L142.5 65.5L133.5 66.5Z" fill="#a6c2ca"/>
 <!-- bed -->
 <path d="M121 83C121 75 132 72.5 150 74.5L178 78V98C160 103.5 134 101 121 91Z" fill="url(#bedg)"/>
 <path d="M175.5 78.5L178 77.5V100L173.5 85Z" fill="#eeeadc"/>
 <path d="M121 88C126 97 152 104 178 97V119.5L126 106.5C122 104.5 120.5 97 121 88Z" fill="#17170f"/>
 <!-- flip flops -->
 <path d="M41.5 117C41 110.5 47 108.5 49.5 112L51 118.5Z" fill="#2f8f86"/><path d="M55.5 118C57 109 63.5 104.5 66 107.5C66.5 112 62 116.5 60 118.5Z" fill="#3a9a90"/>
 <rect x="0" y="0" width="178" height="120" fill="url(#vig)"/>
</g>
<!-- window contents: bright -->
<g id="winN">
 <path d="M50 8L72 16V86L50 91Z" fill="#fbfcf2"/><path d="M75.5 17.5L94 24V79.5L75.5 85Z" fill="#f8faf0"/>
 <path d="M50 34L72 36V50L50 49Z" fill="#e6efc0" opacity="0.55"/><path d="M75.5 37L94 39V52L75.5 51Z" fill="#e2ecc4" opacity="0.5"/>
 <path d="M50 56L72 57V86L50 91Z" fill="#8f98ac" opacity="0.85"/><path d="M75.5 57.5L94 58.5V79.5L75.5 85Z" fill="#b4bcbc" opacity="0.8"/>
 <path d="M52 62L60 60L64 84L54 88Z" fill="#5a4c80" opacity="0.55"/><path d="M64 60L70 60L71 76L66 80Z" fill="#6a6a8a" opacity="0.4"/>
 <path d="M50 55L94 57.5" stroke="#74746a" stroke-width="1.4"/>
 <path d="M73.7 16.5V86" stroke="#8a8a80" stroke-width="1.6"/>
</g>
</defs></svg>
<div class="a " style="left:362px;top:151px;width:206px;height:197px;background:#a9a9a9"></div>
<div class="a " style="left:363px;top:152px;width:204px;height:195px;background:#e9e9e9"></div>
<div class="a " style="left:363px;top:329px;width:204px;height:18px;background:#d1d1d1"></div>
<div class="a " style="left:462px;top:341px;width:2px;height:2px;background:#1a1a1a"></div><div class="a " style="left:466px;top:341px;width:2px;height:2px;background:#1a1a1a"></div>
<svg class="a" style="left:457px;top:232px;" width="16" height="15"><use href="#gup" width="16" height="15"/></svg>
<div class="a " style="left:567px;top:151px;width:206px;height:197px;background:#a9a9a9"></div>
<div class="a " style="left:568px;top:152px;width:204px;height:195px;background:#e9e9e9"></div>
<div class="a " style="left:568px;top:329px;width:204px;height:18px;background:#f0f0c8"></div>
<div class="t " style="left:646.4px;top:332px;font-size:13.5px;letter-spacing:-0.241px;color:#000;">enfused</div>
<svg class="a" style="left:581px;top:173px" width="180" height="136"><defs><linearGradient id="fy" x1="0" y1="0" x2="0" y2="1"><stop offset="0" stop-color="#fbe38f"/><stop offset="0.45" stop-color="#fdd869"/><stop offset="1" stop-color="#fec84b"/></linearGradient></defs><path d="M1 2.5L3 0.5H47L50 3.5H178V133H1Z" fill="#e9b63a"/><path d="M1.5 3L3.2 1.2H46.6L49.6 4.2H177.3V7H1.5Z" fill="#fbd774"/><rect x="1.8" y="6.5" width="175.6" height="126" fill="url(#fy)"/><path d="M1 133.5H178" stroke="#d79f22" stroke-width="1.2"/><rect x="2.5" y="7" width="1.2" height="125" fill="#fdf0b4" opacity="0.8"/></svg>
<div class="a " style="left:588px;top:183px;width:76px;height:57px;overflow:hidden"><svg class="a" style="left:0;top:0;background:#000" width="76" height="57" viewBox="0 0 76 57"><g transform="translate(0,3) scale(0.4270,0.4250)"><g filter="url(#fD1)"><use href="#room"/></g><g filter="url(#blur1)"><path d="M0 0H47V97L0 104Z" fill="#000" opacity="0.62"/><path d="M49 88L93 77L128 86L84 116L52 104Z" fill="#e8e6d8" opacity="0.2"/></g><g filter="url(#blur1)"><path d="M49 9.5L72 17V36.5L49 35.5Z" fill="#d0b68c"/><path d="M76 18.5L90.5 23.5V37.5L76 36.8Z" fill="#d0b68c"/><path d="M49 35L72 36V37.6L49 36.8ZM76 36.3L90.5 37V38.6L76 38Z" fill="#b86038"/><path d="M49 36.8L72 37.6V54.5L49 54.5Z" fill="#46aa7a"/><path d="M76 38L90.5 38.6V54.5L76 54.5Z" fill="#46aa7a"/><path d="M50 40C54 38 58 44 62 41C66 39 69 43 71 41V46C66 49 60 45 55 48C52 49 50 47 50 46ZM77 42C81 40 85 45 90 42V47C85 50 81 46 77 48Z" fill="#a6e6c4"/><path d="M49 56L72 56V71L49 74Z" fill="#264c40"/><path d="M76 56L90.5 56.5V68.5L76 70.5Z" fill="#264c40"/><path d="M49 74L72 71V73.2L49 76.6ZM76 70.5L90.5 68.5V70.4L76 72.6Z" fill="#b8648a"/><path d="M49 76.6L72 73.2V80L49 86ZM76 72.6L90.5 70.4V75L76 79Z" fill="#3c3448"/><path d="M49 55.2L90.5 55.4M60 37V84M84 38.5V76" stroke="#1a1a16" stroke-width="1"/></g></g></svg></div>
<div class="a " style="left:675px;top:183px;width:76px;height:57px;overflow:hidden"><svg class="a" style="left:0;top:0;background:#000" width="76" height="57" viewBox="0 0 76 57"><g transform="translate(0,3) scale(0.4270,0.4250)"><g filter="url(#fD1)"><use href="#room"/></g><g filter="url(#blur1)"><path d="M0 0H47V97L0 104Z" fill="#000" opacity="0.62"/><path d="M49 88L93 77L128 86L84 116L52 104Z" fill="#e8e6d8" opacity="0.2"/></g><g filter="url(#blur1)"><path d="M49 9.5L72 17V36.5L49 35.5Z" fill="#d0b68c"/><path d="M76 18.5L90.5 23.5V37.5L76 36.8Z" fill="#d0b68c"/><path d="M49 35L72 36V37.6L49 36.8ZM76 36.3L90.5 37V38.6L76 38Z" fill="#b86038"/><path d="M49 36.8L72 37.6V54.5L49 54.5Z" fill="#46aa7a"/><path d="M76 38L90.5 38.6V54.5L76 54.5Z" fill="#46aa7a"/><path d="M50 40C54 38 58 44 62 41C66 39 69 43 71 41V46C66 49 60 45 55 48C52 49 50 47 50 46ZM77 42C81 40 85 45 90 42V47C85 50 81 46 77 48Z" fill="#a6e6c4"/><path d="M49 56L72 56V71L49 74Z" fill="#264c40"/><path d="M76 56L90.5 56.5V68.5L76 70.5Z" fill="#264c40"/><path d="M49 74L72 71V73.2L49 76.6ZM76 70.5L90.5 68.5V70.4L76 72.6Z" fill="#b8648a"/><path d="M49 76.6L72 73.2V80L49 86ZM76 72.6L90.5 70.4V75L76 79Z" fill="#3c3448"/><path d="M49 55.2L90.5 55.4M60 37V84M84 38.5V76" stroke="#1a1a16" stroke-width="1"/></g></g></svg></div>
<div class="a " style="left:772px;top:151px;width:206px;height:197px;background:#a9a9a9"></div>
<div class="a " style="left:773px;top:152px;width:204px;height:195px;background:#e9e9e9"></div>
<div class="a " style="left:773px;top:329px;width:204px;height:18px;background:#f0f0c8"></div>
<svg class="a" style="left:784px;top:163px;" width="11" height="11"><use href="#tchk" width="11" height="11"/></svg>
<svg class="a" style="left:856px;top:213px" width="39" height="50"><path d="M0.5 0.5H27L38.5 12V49.5H0.5Z" fill="#f4f4f4" stroke="#e6e6e6"/><path d="M27 0.5V12H38.5Z" fill="#e4e4e4"/></svg>
<div class="a " style="left:977px;top:151px;width:206px;height:197px;background:#a9a9a9"></div>
<div class="a " style="left:978px;top:152px;width:204px;height:195px;background:#e9e9e9"></div>
<div class="a " style="left:978px;top:329px;width:204px;height:18px;background:#f0f0c8"></div>
<div class="t " style="left:1038.9px;top:332px;font-size:13.5px;letter-spacing:-1.041px;color:#000;">IMG_2894.JPG</div>
<div class="a " style="left:988px;top:170px;width:184px;height:139px;background:#fff;box-shadow:0.5px 1px 2.5px rgba(0,0,0,0.5)"><div class="a " style="left:3px;top:3px;width:178px;height:133px;overflow:hidden"><svg class="a" style="left:0;top:0;background:#000" width="178" height="133" viewBox="0 0 178 133"><g transform="translate(0,7) scale(1.0000,0.9917)"><g filter="url(#fD1)"><use href="#room"/></g><g filter="url(#blur1)"><path d="M0 0H47V97L0 104Z" fill="#000" opacity="0.62"/><path d="M49 88L93 77L128 86L84 116L52 104Z" fill="#e8e6d8" opacity="0.2"/></g><g filter="url(#blur1)"><path d="M49 9.5L72 17V36.5L49 35.5Z" fill="#d0b68c"/><path d="M76 18.5L90.5 23.5V37.5L76 36.8Z" fill="#d0b68c"/><path d="M49 35L72 36V37.6L49 36.8ZM76 36.3L90.5 37V38.6L76 38Z" fill="#b86038"/><path d="M49 36.8L72 37.6V54.5L49 54.5Z" fill="#46aa7a"/><path d="M76 38L90.5 38.6V54.5L76 54.5Z" fill="#46aa7a"/><path d="M50 40C54 38 58 44 62 41C66 39 69 43 71 41V46C66 49 60 45 55 48C52 49 50 47 50 46ZM77 42C81 40 85 45 90 42V47C85 50 81 46 77 48Z" fill="#a6e6c4"/><path d="M49 56L72 56V71L49 74Z" fill="#264c40"/><path d="M76 56L90.5 56.5V68.5L76 70.5Z" fill="#264c40"/><path d="M49 74L72 71V73.2L49 76.6ZM76 70.5L90.5 68.5V70.4L76 72.6Z" fill="#b8648a"/><path d="M49 76.6L72 73.2V80L49 86ZM76 72.6L90.5 70.4V75L76 79Z" fill="#3c3448"/><path d="M49 55.2L90.5 55.4M60 37V84M84 38.5V76" stroke="#1a1a16" stroke-width="1"/></g></g></svg></div></div>
<svg class="a" style="left:989px;top:163px;" width="11" height="11"><use href="#tchk" width="11" height="11"/></svg>
<svg class="a" style="left:1141px;top:310px;" width="10" height="10"><use href="#sav" width="10" height="10"/></svg>
<svg class="a" style="left:1153px;top:310px;" width="19" height="10"><use href="#exif" width="19" height="10"/></svg>
<div class="a " style="left:1182px;top:151px;width:206px;height:197px;background:#a9a9a9"></div>
<div class="a " style="left:1183px;top:152px;width:204px;height:195px;background:#e9e9e9"></div>
<div class="a " style="left:1183px;top:329px;width:204px;height:18px;background:#f0f0c8"></div>
<div class="t " style="left:1243.9px;top:332px;font-size:13.5px;letter-spacing:-1.041px;color:#000;">IMG_2895.JPG</div>
<div class="a " style="left:1193px;top:170px;width:184px;height:139px;background:#fff;box-shadow:0.5px 1px 2.5px rgba(0,0,0,0.5)"><div class="a " style="left:3px;top:3px;width:178px;height:133px;overflow:hidden"><svg class="a" style="left:0;top:0;background:#000" width="178" height="133" viewBox="0 0 178 133"><g transform="translate(0,7) scale(1.0000,0.9917)"><g filter="url(#fD2)"><use href="#room"/></g><g filter="url(#blur1)"><path d="M0 0H47V97L0 104Z" fill="#000" opacity="0.8"/><path d="M49 88L93 77L128 86L84 116L52 104Z" fill="#e8e6d8" opacity="0.09"/></g><g filter="url(#blur1)"><path d="M49 9.5L72 17V36.5L49 35.5Z" fill="#98806a"/><path d="M76 18.5L90.5 23.5V37.5L76 36.8Z" fill="#98806a"/><path d="M49 35L72 36V37.6L49 36.8ZM76 36.3L90.5 37V38.6L76 38Z" fill="#a04028"/><path d="M49 36.8L72 37.6V54.5L49 54.5Z" fill="#3aa868"/><path d="M76 38L90.5 38.6V54.5L76 54.5Z" fill="#3aa868"/><path d="M50 40C54 38 58 44 62 41C66 39 69 43 71 41V46C66 49 60 45 55 48C52 49 50 47 50 46ZM77 42C81 40 85 45 90 42V47C85 50 81 46 77 48Z" fill="#86d8a8"/><path d="M49 56L72 56V71L49 74Z" fill="#22403a"/><path d="M76 56L90.5 56.5V68.5L76 70.5Z" fill="#22403a"/><path d="M49 74L72 71V73.2L49 76.6ZM76 70.5L90.5 68.5V70.4L76 72.6Z" fill="#b04868"/><path d="M49 76.6L72 73.2V80L49 86ZM76 72.6L90.5 70.4V75L76 79Z" fill="#3c2c48"/><path d="M49 55.2L90.5 55.4M60 37V84M84 38.5V76" stroke="#0a0a08" stroke-width="1"/></g></g></svg></div></div>
<svg class="a" style="left:1194px;top:163px;" width="11" height="11"><use href="#tchk" width="11" height="11"/></svg>
<svg class="a" style="left:1346px;top:310px;" width="10" height="10"><use href="#sav" width="10" height="10"/></svg>
<svg class="a" style="left:1358px;top:310px;" width="19" height="10"><use href="#exif" width="19" height="10"/></svg>
<div class="a " style="left:1387px;top:151px;width:206px;height:197px;background:#a9a9a9"></div>
<div class="a " style="left:1388px;top:152px;width:204px;height:195px;background:#e9e9e9"></div>
<div class="a " style="left:1388px;top:329px;width:204px;height:18px;background:#f0f0c8"></div>
<div class="t " style="left:1448.9px;top:332px;font-size:13.5px;letter-spacing:-1.041px;color:#000;">IMG_2896.JPG</div>
<div class="a " style="left:1398px;top:170px;width:184px;height:139px;background:#fff;box-shadow:0.5px 1px 2.5px rgba(0,0,0,0.5)"><div class="a " style="left:3px;top:3px;width:178px;height:133px;overflow:hidden"><svg class="a" style="left:0;top:0;background:#000" width="178" height="133" viewBox="0 0 178 133"><g transform="translate(0,7) scale(1.0000,0.9917)"><g filter="url(#fN)"><use href="#room"/><use href="#winN"/></g></g></svg></div></div>
<svg class="a" style="left:1399px;top:163px;" width="11" height="11"><use href="#tchk" width="11" height="11"/></svg>
<svg class="a" style="left:1551px;top:310px;" width="10" height="10"><use href="#sav" width="10" height="10"/></svg>
<svg class="a" style="left:1563px;top:310px;" width="19" height="10"><use href="#exif" width="19" height="10"/></svg>
<div class="a " style="left:1592px;top:151px;width:206px;height:197px;background:#a9a9a9"></div>
<div class="a " style="left:1593px;top:152px;width:204px;height:195px;background:#e9e9e9"></div>
<div class="a " style="left:1593px;top:329px;width:204px;height:18px;background:#f0f0c8"></div>
<div class="t " style="left:1653.9px;top:332px;font-size:13.5px;letter-spacing:-1.041px;color:#000;">IMG_2897.JPG</div>
<div class="a " style="left:1603px;top:170px;width:184px;height:139px;background:#fff;box-shadow:0.5px 1px 2.5px rgba(0,0,0,0.5)"><div class="a " style="left:3px;top:3px;width:178px;height:133px;overflow:hidden"><svg class="a" style="left:0;top:0;background:#000" width="178" height="133" viewBox="0 0 178 133"><g transform="translate(0,7) scale(1.0000,0.9917)"><g filter="url(#fD3)"><use href="#room"/></g><g filter="url(#blur1)"><path d="M0 0H47V97L0 104Z" fill="#000" opacity="0.9"/><path d="M49 88L93 77L128 86L84 116L52 104Z" fill="#e8e6d8" opacity="0.02"/></g><g filter="url(#blur1)"><path d="M49 9.5L72 17V36.5L49 35.5Z" fill="#48191f"/><path d="M76 18.5L90.5 23.5V37.5L76 36.8Z" fill="#48191f"/><path d="M49 35L72 36V37.6L49 36.8ZM76 36.3L90.5 37V38.6L76 38Z" fill="#4a1216"/><path d="M49 36.8L72 37.6V54.5L49 54.5Z" fill="#1f4a36"/><path d="M76 38L90.5 38.6V54.5L76 54.5Z" fill="#1f4a36"/><path d="M50 40C54 38 58 44 62 41C66 39 69 43 71 41V46C66 49 60 45 55 48C52 49 50 47 50 46ZM77 42C81 40 85 45 90 42V47C85 50 81 46 77 48Z" fill="#33694e"/><path d="M49 56L72 56V71L49 74Z" fill="#10181a"/><path d="M76 56L90.5 56.5V68.5L76 70.5Z" fill="#10181a"/><path d="M49 74L72 71V73.2L49 76.6ZM76 70.5L90.5 68.5V70.4L76 72.6Z" fill="#861a5c"/><path d="M49 76.6L72 73.2V80L49 86ZM76 72.6L90.5 70.4V75L76 79Z" fill="#1a0a1e"/><path d="M49 55.2L90.5 55.4M60 37V84M84 38.5V76" stroke="#040404" stroke-width="1"/></g></g></svg></div></div>
<svg class="a" style="left:1604px;top:163px;" width="11" height="11"><use href="#tchk" width="11" height="11"/></svg>
<svg class="a" style="left:1756px;top:310px;" width="10" height="10"><use href="#sav" width="10" height="10"/></svg>
<svg class="a" style="left:1768px;top:310px;" width="19" height="10"><use href="#exif" width="19" height="10"/></svg>
<div class="a " style="left:362px;top:347px;width:206px;height:197px;background:#a9a9a9"></div>
<div class="a " style="left:363px;top:348px;width:204px;height:195px;background:#e9e9e9"></div>
<div class="a " style="left:363px;top:525px;width:204px;height:18px;background:#f0f0c8"></div>
<div class="t " style="left:423.9px;top:528px;font-size:13.5px;letter-spacing:-1.041px;color:#000;">IMG_2898.JPG</div>
<div class="a " style="left:373px;top:366px;width:184px;height:139px;background:#fff;box-shadow:0.5px 1px 2.5px rgba(0,0,0,0.5)"><div class="a " style="left:3px;top:3px;width:178px;height:133px;overflow:hidden"><svg class="a" style="left:0;top:0;background:#000" width="178" height="133" viewBox="0 0 178 133"><g transform="translate(0,7) scale(1.0000,0.9917)"><g filter="url(#fB1)"><use href="#room"/><use href="#winN"/></g></g></svg></div></div>
<svg class="a" style="left:374px;top:359px;" width="11" height="11"><use href="#tchk" width="11" height="11"/></svg>
<svg class="a" style="left:526px;top:506px;" width="10" height="10"><use href="#sav" width="10" height="10"/></svg>
<svg class="a" style="left:538px;top:506px;" width="19" height="10"><use href="#exif" width="19" height="10"/></svg>
<div class="a " style="left:567px;top:347px;width:206px;height:197px;background:#a9a9a9"></div>
<div class="a " style="left:568px;top:348px;width:204px;height:195px;background:#e9e9e9"></div>
<div class="a " style="left:568px;top:525px;width:204px;height:18px;background:#f0f0c8"></div>
<div class="t " style="left:628.9px;top:528px;font-size:13.5px;letter-spacing:-1.041px;color:#000;">IMG_2899.JPG</div>
<div class="a " style="left:578px;top:366px;width:184px;height:139px;background:#fff;box-shadow:0.5px 1px 2.5px rgba(0,0,0,0.5)"><div class="a " style="left:3px;top:3px;width:178px;height:133px;overflow:hidden"><svg class="a" style="left:0;top:0;background:#000" width="178" height="133" viewBox="0 0 178 133"><g transform="translate(0,7) scale(1.0000,0.9917)"><g filter="url(#fB2)"><use href="#room"/><use href="#winN"/></g></g></svg></div></div>
<svg class="a" style="left:579px;top:359px;" width="11" height="11"><use href="#tchk" width="11" height="11"/></svg>
<svg class="a" style="left:731px;top:506px;" width="10" height="10"><use href="#sav" width="10" height="10"/></svg>
<svg class="a" style="left:743px;top:506px;" width="19" height="10"><use href="#exif" width="19" height="10"/></svg>
<div class="a " style="left:766px;top:246px;width:390px;height:542px;background:#f0f0f0;border:1px solid #9c9c9c;border-top-color:#c4c4c4;box-shadow:0 2px 14px rgba(0,0,0,0.3),0 0 3px rgba(0,0,0,0.2)"></div>
<div class="a " style="left:767px;top:247px;width:388px;height:36.5px;background:#fff"></div>
<svg class="a" style="left:775px;top:254px;" width="19.5" height="19.5"><use href="#xn" width="19.5" height="19.5"/></svg>
<div class="t " style="left:800.1px;top:258px;font-size:14.5px;letter-spacing:0.470px;color:#9c9c9c;">Import and sort</div>
<div class="t " style="left:1063.5px;top:257px;font-size:15px;letter-spacing:0.000px;color:#999;">?</div>
<svg class="a" style="left:1119px;top:258px" width="13" height="13"><path d="M0.5 0.5L12 12M12 0.5L0.5 12" stroke="#777" stroke-width="1.1" fill="none"/></svg>
<div class="a " style="left:778px;top:302px;width:366px;height:104px;border:1px solid #dcdcdc"></div><div class="a " style="left:785px;top:295px;width:45px;height:15px;background:#f0f0f0"></div><div class="t " style="left:786.9px;top:296px;font-size:13.5px;letter-spacing:-0.236px;color:#000;">Source</div>
<div class="a " style="left:800px;top:335px;width:238px;height:22px;background:#fff;border:1px solid #7a7a7a"></div>
<div class="t " style="left:805.4px;top:340px;font-size:13.5px;letter-spacing:-0.545px;color:#000;">I:\DCIM\100CANON</div>
<svg class="a" style="left:1022px;top:343px;" width="10" height="6"><use href="#chev" width="10" height="6"/></svg>
<div class="a " style="left:1046px;top:336px;width:25px;height:20px;background:#e1e1e1;border:1px solid #adadad"></div><div class="a " style="left:1053px;top:349px;width:2px;height:2px;background:#1a1a1a"></div><div class="a " style="left:1057px;top:349px;width:2px;height:2px;background:#1a1a1a"></div><div class="a " style="left:1061px;top:349px;width:2px;height:2px;background:#1a1a1a"></div>
<div class="a " style="left:1080px;top:334px;width:40px;height:24px;background:#e1e1e1;border:1px solid #adadad"></div><div class="a " style="left:1103px;top:336px;width:1px;height:20px;background:#fbfbfb"></div><div class="a " style="left:1104px;top:336px;width:1px;height:20px;background:#a8a8a8"></div><svg class="a" style="left:1084.2px;top:337.4px;" width="16" height="16"><use href="#star" width="16" height="16"/></svg><svg class="a" style="left:1107px;top:343px;fill:#000" width="9" height="5"><use href="#dd" width="9" height="5"/></svg>
<div class="a " style="left:789px;top:378px;width:16px;height:16px;background:#fff;border:1px solid #333"></div><svg class="a" style="left:789px;top:378px" width="16" height="16"><path d="M2.6 8.6L6.6 12.2L13.4 4.8" fill="none" stroke="#3a3a3a" stroke-width="1.25"/></svg>
<div class="t " style="left:810.4px;top:380px;font-size:13.5px;letter-spacing:-0.234px;color:#000;">Include subfolders</div>
<div class="a " style="left:778px;top:422.5px;width:366px;height:133.5px;border:1px solid #dcdcdc"></div><div class="a " style="left:785px;top:415.5px;width:68px;height:15px;background:#f0f0f0"></div><div class="t " style="left:786.9px;top:416px;font-size:13.5px;letter-spacing:-0.295px;color:#000;">Destination</div>
<div class="a " style="left:800px;top:455px;width:238px;height:22px;background:#fff;border:1px solid #7a7a7a"></div>
<div class="t " style="left:805.4px;top:460px;font-size:13.5px;letter-spacing:-0.143px;color:#000;">D:\Pictures</div>
<svg class="a" style="left:1022px;top:463px;" width="10" height="6"><use href="#chev" width="10" height="6"/></svg>
<div class="a " style="left:1046px;top:456px;width:25px;height:20px;background:#e1e1e1;border:1px solid #adadad"></div><div class="a " style="left:1053px;top:469px;width:2px;height:2px;background:#1a1a1a"></div><div class="a " style="left:1057px;top:469px;width:2px;height:2px;background:#1a1a1a"></div><div class="a " style="left:1061px;top:469px;width:2px;height:2px;background:#1a1a1a"></div>
<div class="a " style="left:1080px;top:454px;width:40px;height:24px;background:#e1e1e1;border:1px solid #adadad"></div><div class="a " style="left:1103px;top:456px;width:1px;height:20px;background:#fbfbfb"></div><div class="a " style="left:1104px;top:456px;width:1px;height:20px;background:#a8a8a8"></div><svg class="a" style="left:1084.2px;top:457.4px;" width="16" height="16"><use href="#star" width="16" height="16"/></svg><svg class="a" style="left:1107px;top:463px;fill:#000" width="9" height="5"><use href="#dd" width="9" height="5"/></svg>
<div class="t " style="left:788.4px;top:501px;font-size:13.5px;letter-spacing:-0.212px;color:#000;">Subfolder</div>
<div class="a " style="left:850px;top:496px;width:102px;height:22px;background:#e1e1e1;border:1px solid #adadad"></div>
<div class="t " style="left:853.4px;top:501px;font-size:13.5px;letter-spacing:-0.715px;color:#000;">yyyy_MM_dd</div>
<svg class="a" style="left:938px;top:505px" width="8" height="5"><path d="M0 0H8L4 4.5Z"/></svg>
<div class="a " style="left:789px;top:527px;width:16px;height:16px;background:#fff;border:1px solid #333"></div>
<div class="t " style="left:810.4px;top:529px;font-size:13.5px;letter-spacing:-0.200px;color:#000;">New filename</div>
<div class="a " style="left:900px;top:524px;width:224px;height:22px;background:#ccc"></div>
<div class="t " style="left:903.4px;top:529px;font-size:13.5px;letter-spacing:-0.380px;color:#8a8a8a;">Filename.Ext</div>
<svg class="a" style="left:1110px;top:533px" width="8" height="5"><path d="M0 0H8L4 4.5Z" fill="#e8e8e8"/></svg>
<div class="a " style="left:778px;top:572.5px;width:366px;height:73.5px;border:1px solid #dcdcdc"></div><div class="a " style="left:785px;top:565.5px;width:209.5px;height:15px;background:#f0f0f0"></div><div class="t " style="left:786.9px;top:566px;font-size:13.5px;letter-spacing:-0.280px;color:#000;">Keywords to assign at import (XMP)</div>
<div class="t " style="left:788.4px;top:594px;font-size:13.5px;letter-spacing:-0.159px;color:#000;">Use ; to separate keywords</div>
<div class="a " style="left:789px;top:614px;width:343px;height:22px;background:#fff;border:1px solid #7a7a7a"></div>
<div class="a " style="left:778px;top:662.5px;width:366px;height:77.5px;border:1px solid #dcdcdc"></div><div class="a " style="left:785px;top:655.5px;width:33.5px;height:15px;background:#f0f0f0"></div><div class="t " style="left:786.9px;top:656px;font-size:13.5px;letter-spacing:0.020px;color:#000;">Filter</div>
<div class="a " style="left:789px;top:685px;width:16px;height:16px;background:#fff;border:1px solid #333"></div>
<div class="t " style="left:810.4px;top:687px;font-size:13.5px;letter-spacing:-0.310px;color:#000;">Date</div>
<div class="t " style="left:868.9px;top:687px;font-size:13.5px;letter-spacing:0.700px;color:#000;">from</div>
<div class="a " style="left:903px;top:682px;width:92px;height:22px;background:#f0f0f0;border:1px solid #d9d9d9"></div><div class="t " style="left:906.6999999999999px;top:687px;font-size:13.5px;letter-spacing:0.030px;color:#8a8a8a;">1/01/2000</div><svg class="a" style="left:980px;top:687px" width="11" height="14"><path d="M1.5 4L5.5 0.3L9.5 4ZM1.5 9.5L5.5 13.2L9.5 9.5Z" fill="#666"/><rect x="0" y="5.8" width="11" height="1" fill="#d0d0d0"/></svg>
<div class="t " style="left:1000.4px;top:687px;font-size:13.5px;letter-spacing:1.334px;color:#000;">to</div>
<div class="a " style="left:1018px;top:682px;width:92px;height:22px;background:#f0f0f0;border:1px solid #d9d9d9"></div><div class="t " style="left:1021.6999999999999px;top:687px;font-size:13.5px;letter-spacing:0.030px;color:#8a8a8a;">1/01/2017</div><svg class="a" style="left:1095px;top:687px" width="11" height="14"><path d="M1.5 4L5.5 0.3L9.5 4ZM1.5 9.5L5.5 13.2L9.5 9.5Z" fill="#666"/><rect x="0" y="5.8" width="11" height="1" fill="#d0d0d0"/></svg>
<div class="a " style="left:789px;top:712px;width:16px;height:16px;background:#fff;border:1px solid #333"></div>
<div class="t " style="left:810.4px;top:714px;font-size:13.5px;letter-spacing:-0.093px;color:#000;">Transfer files with no exif to 'Other Files' folder</div>
<div class="a " style="left:952px;top:749px;width:91px;height:26px;background:#e1e1e1;border:1px solid #adadad"></div><div class="t " style="left:988.9px;top:756px;font-size:13.5px;letter-spacing:-1.916px;color:#000;">OK</div>
<div class="a " style="left:1052px;top:749px;width:91px;height:26px;background:#e1e1e1;border:1px solid #adadad"></div><div class="t " style="left:1077.9px;top:756px;font-size:13.5px;letter-spacing:-0.486px;color:#000;">Cancel</div>
<div class="a " style="left:1249px;top:355px;width:430px;height:246px;background:#f0f0f0;border:1px solid #1e1e1e;box-shadow:0 3px 16px rgba(0,0,0,0.4),0 0 3px rgba(0,0,0,0.3)"></div>
<div class="a " style="left:1250px;top:356px;width:428px;height:37.5px;background:#fff"></div>
<svg class="a" style="left:1258.5px;top:364px;" width="20" height="20"><use href="#xn" width="20" height="20"/></svg>
<div class="t " style="left:1283.9px;top:368px;font-size:14.5px;letter-spacing:0.042px;color:#000;">24% of 100MB (Copying...)</div>
<div class="t " style="left:1586.5px;top:367px;font-size:15px;letter-spacing:0.000px;color:#000;">?</div>
<svg class="a" style="left:1641px;top:368px" width="14" height="13"><path d="M0.5 0.5L13 12M13 0.5L0.5 12" stroke="#000" stroke-width="1.2" fill="none"/></svg>
<div class="t " style="left:1257.9px;top:406px;font-size:13.5px;letter-spacing:-0.436px;color:#000;">Source</div>
<div class="a " style="left:1327px;top:401px;width:343px;height:22px;background:#fff;border:1px solid #7a7a7a"></div>
<div class="t " style="left:1257.9px;top:434px;font-size:13.5px;letter-spacing:-0.395px;color:#000;">Destination</div>
<div class="a " style="left:1327px;top:429px;width:343px;height:22px;background:#fff;border:1px solid #7a7a7a"></div>
<div class="a " style="left:1258px;top:457px;width:373px;height:24px;background:#e6e6e6;border:1px solid #bcbcbc"></div><div class="a " style="left:1259px;top:458px;width:87px;height:22px;background:linear-gradient(90deg,#1fb53a 0%,#6fdd7d 42%,#4ccc5e 60%,#10ad2c 100%)"></div><div class="a " style="left:1259px;top:458px;width:87px;height:22px;background:linear-gradient(180deg,rgba(255,255,255,0.28) 0%,rgba(255,255,255,0.05) 45%,rgba(0,0,0,0.0) 55%,rgba(0,0,0,0.10) 100%)"></div>
<div class="t " style="left:1636.9px;top:463px;font-size:13.5px;letter-spacing:-0.216px;color:#000;">24%</div>
<div class="a " style="left:1258px;top:487px;width:373px;height:24px;background:#e6e6e6;border:1px solid #bcbcbc"></div><div class="a " style="left:1259px;top:488px;width:87px;height:22px;background:linear-gradient(90deg,#1fb53a 0%,#6fdd7d 42%,#4ccc5e 60%,#10ad2c 100%)"></div><div class="a " style="left:1259px;top:488px;width:87px;height:22px;background:linear-gradient(180deg,rgba(255,255,255,0.28) 0%,rgba(255,255,255,0.05) 45%,rgba(0,0,0,0.0) 55%,rgba(0,0,0,0.10) 100%)"></div>
<div class="t " style="left:1636.9px;top:493px;font-size:13.5px;letter-spacing:-0.216px;color:#000;">24%</div>
<div class="t " style="left:1257.9px;top:519px;font-size:13.5px;letter-spacing:-0.427px;color:#000;">10 MB of 100 MB completed</div>
<div class="t " style="left:1615.4px;top:519px;font-size:13.5px;letter-spacing:0.157px;color:#000;">2 / 5 files</div>
<div class="t " style="left:1257.9px;top:541px;font-size:13.5px;letter-spacing:-0.125px;color:#000;">5 MB/s (00:00:15 remaining)</div>
<div class="t " style="left:1617.4px;top:541px;font-size:13.5px;letter-spacing:0.202px;color:#000;">0 / 1 dirs</div>
<div class="a " style="left:1479px;top:563px;width:91px;height:26px;background:#cccccc;border:1px solid #bfbfbf"></div><div class="t " style="left:1504.9px;top:570px;font-size:13.5px;letter-spacing:-0.486px;color:#838383;">Cancel</div>
<div class="a " style="left:1578px;top:563px;width:91px;height:26px;background:#e1e1e1;border:2px solid #0078d7"></div><div class="t " style="left:1607.65px;top:570px;font-size:13.5px;letter-spacing:-0.604px;color:#000;">Close</div>
<div class="a " style="left:0px;top:1042px;width:1920px;height:38px;background:#070707"></div>
<div class="a " style="left:645px;top:1042px;width:1100px;height:22px;background:linear-gradient(180deg,rgba(46,46,54,0.75) 0%,rgba(30,30,36,0.45) 55%,rgba(10,10,10,0) 100%);-webkit-mask-image:linear-gradient(90deg,transparent 0%,#000 6%,#000 55%,rgba(0,0,0,0.4) 75%,transparent 100%);mask-image:linear-gradient(90deg,transparent 0%,#000 6%,#000 55%,rgba(0,0,0,0.4) 75%,transparent 100%)"></div>
<svg class="a" style="left:12px;top:1052px" width="20" height="20"><path d="M0 3L8.2 1.9V9.3H0ZM9.3 1.7L20 0.2V9.3H9.3ZM0 10.4H8.2V17.8L0 16.7ZM9.3 10.4H20V19.6L9.3 18.1Z" fill="#fff"/></svg>
<svg class="a" style="left:56px;top:1050px" width="22" height="22"><circle cx="13.5" cy="8.5" r="6.4" fill="none" stroke="#fff" stroke-width="1.6"/><path d="M9 13L1.2 20.8" stroke="#fff" stroke-width="1.8"/></svg>
<svg class="a" style="left:100px;top:1052px" width="25" height="18"><rect x="4.8" y="0.8" width="15.4" height="16.4" fill="none" stroke="#fff" stroke-width="1.5"/><path d="M2.5 3.5H0.8V14.5H2.5M22.5 3.5H24.2V14.5H22.5" fill="none" stroke="#fff" stroke-width="1.4"/></svg>
<svg class="a" style="left:151px;top:1051px" width="19" height="20"><path d="M1 9.5C1.5 3.5 6 0.5 10 0.5C15 0.5 18.3 4.3 18.3 9.2V11.6H6.2C6.4 15 9.6 16.4 12.4 16.4C14.6 16.4 16.2 15.8 17.6 15V18.4C16 19.3 14 19.8 11.8 19.8C6.4 19.8 2.2 16.6 2.2 11.4C2.2 8.4 3.8 6 6 4.6C3.6 5.4 2 7 1 9.5ZM6.3 8.2H13.2C13.2 6 12 4.2 9.8 4.2C7.8 4.2 6.6 6 6.3 8.2Z" fill="#1382e0"/></svg>
<svg class="a" style="left:195px;top:1052px" width="23" height="19"><path d="M0.5 1.5A1 1 0 0 1 1.5 0.5H8L10 2.5H21.5A1 1 0 0 1 22.5 3.5V6H0.5Z" fill="#e9b730"/><rect x="0.5" y="4.5" width="22" height="14" rx="0.8" fill="#fad565"/><rect x="2.5" y="9" width="18" height="9.5" fill="#44b2e8"/><rect x="7" y="12.5" width="9" height="6" fill="#fad565"/><rect x="9" y="14.5" width="5" height="4" fill="#2d8fcc"/></svg>
<svg class="a" style="left:241px;top:1051px" width="21" height="21"><path d="M2 3L17 1.5L19.5 17L4 19.5Z" fill="#5f8fc0"/><rect x="3.5" y="3.5" width="14" height="14" rx="1.5" fill="#f08a28"/><rect x="5" y="5" width="11" height="11" rx="1" fill="#f7b060"/><path d="M8.5 7L14 10.5L8.5 14Z" fill="#fff"/></svg>
<svg class="a" style="left:288px;top:1050px" width="18" height="22"><path d="M0.5 0.5H11.5L17.5 6.5V21.5H0.5Z" fill="#f4f4f4"/><path d="M11.5 0.5V6.5H17.5Z" fill="#8c8c8c"/></svg>
<svg class="a" style="left:333px;top:1050px" width="23" height="22"><path d="M1 4L19 0.8L22 18L4 21Z" fill="#d8d4d0"/><circle cx="11.5" cy="11" r="7.2" fill="#e8e0d8" stroke="#c87820" stroke-width="1.6"/><path d="M9 7L15 11L9 15Z" fill="#d88228"/></svg>
<svg class="a" style="left:379px;top:1050px" width="22" height="22"><circle cx="11" cy="11" r="10.4" fill="#dc4437"/><path d="M11 11L1.9 6A10.4 10.4 0 0 0 8 21Z" fill="#1da362"/><path d="M11 11L8 21A10.4 10.4 0 0 0 20.8 7.5Z" fill="#fdce3d"/><path d="M11 11L20.8 7.5A10.4 10.4 0 0 0 1.9 6Z" fill="#dc4437"/><circle cx="11" cy="11" r="4.9" fill="#fff"/><circle cx="11" cy="11" r="3.9" fill="#4a8af4"/></svg>
<svg class="a" style="left:425px;top:1052px" width="22" height="18"><path d="M0.5 5.5L11 0.5L21.5 5.5V17.5H0.5Z" fill="#fff"/><path d="M1.5 6.5L14 12.5L21 9" stroke="#0a0a0a" stroke-width="1.4" fill="none"/></svg>
<svg class="a" style="left:470px;top:1050px" width="24" height="23"><g fill="#fff" stroke="#0a0a0a" stroke-width="0.8"><rect x="2" y="5" width="9" height="14" rx="1" transform="rotate(-24 6 12)"/><rect x="6" y="3" width="9" height="15" rx="1" transform="rotate(-8 10 11)"/><rect x="10.5" y="3.5" width="10" height="15.5" rx="1" transform="rotate(14 15 11)"/></g><path d="M15.6 8.4C17.6 10.4 19 11.6 18 13.4C17.4 14.4 16.2 14.2 15.8 13.6L16 15.6H14.2L14.8 13.6C14 14.2 12.8 14 12.6 12.8C12.3 11.2 14.4 10.4 15.6 8.4Z" fill="#0a0a0a"/></svg>
<svg class="a" style="left:517px;top:1049px" width="21" height="24"><path d="M8.8 0.8H12.2L17.2 17H3.8Z" fill="#f48b00"/><path d="M7.3 5.6H13.7L14.9 9.4H6.1ZM4.9 13.2H16.1L17.2 17H3.8Z" fill="#fff" opacity="0.92"/><path d="M1.5 17.4H19.5L20.6 22.6H0.4Z" fill="#f07e00"/></svg>
<svg class="a" style="left:563px;top:1050px" width="22" height="22"><path d="M11 0.6L21.4 11L11 21.4L0.6 11Z" fill="#2f9fe0"/><path d="M11 3L13.5 5.5L8 11L13.5 16.5L11 19L3 11ZM14.6 6.6L19 11L14.6 15.4L10.2 11Z" fill="#fff"/><path d="M11 7.4L14.6 11L11 14.6L7.4 11Z" fill="#bfe2f7"/></svg>
<div class="a " style="left:598px;top:1042px;width:45px;height:38px;background:#3a3a3a"></div>
<svg class="a" style="left:609.5px;top:1049.5px;" width="22" height="22"><use href="#xn" width="22" height="22"/></svg>
<div class="a " style="left:189px;top:1077.5px;width:35px;height:2.5px;background:#c08ae8"></div>
<div class="a " style="left:557px;top:1077.5px;width:35px;height:2.5px;background:#c08ae8"></div>
<div class="a " style="left:598px;top:1077.5px;width:45px;height:2.5px;background:#c08ae8"></div>
<svg class="a" style="left:1608px;top:1057px" width="18" height="10"><path d="M1 9L9 1.2L17 9" fill="none" stroke="#fff" stroke-width="1.3"/></svg>
<svg class="a" style="left:1640px;top:1051px" width="18" height="22"><rect x="2.6" y="0.8" width="7" height="5.4" fill="none" stroke="#fff" stroke-width="1.1"/><rect x="4.2" y="2.6" width="1.2" height="1.4" fill="#fff"/><rect x="6.8" y="2.6" width="1.2" height="1.4" fill="#fff"/><path d="M1 6.4H11.2V18.6A1 1 0 0 1 10.2 19.6H2A1 1 0 0 1 1 18.6Z" fill="none" stroke="#fff" stroke-width="1.2"/><path d="M9.6 16.4L12.4 19.4L16.6 14.4" fill="none" stroke="#ddd" stroke-width="1"/></svg>
<svg class="a" style="left:1667px;top:1056px" width="21" height="12"><rect x="0.8" y="0.8" width="17" height="10" fill="none" stroke="#fff" stroke-width="1.4"/><rect x="18.4" y="3.6" width="1.6" height="4.4" fill="#fff"/><rect x="2.6" y="2.6" width="6.6" height="6.4" fill="#fff"/></svg>
<svg class="a" style="left:1699px;top:1053px" width="19" height="17"><g fill="none" stroke="#fff" stroke-width="1.2"><path d="M1.2 15.6C1.6 7.6 7.4 1.6 15 1.2"/><path d="M4.8 15.6C5 9.6 9.2 5.2 15 4.8"/><path d="M8.4 15.6C8.6 11.6 11.2 8.8 15 8.4"/></g><rect x="12.2" y="12.8" width="3.2" height="3.2" fill="#fff"/></svg>
<svg class="a" style="left:1726px;top:1051px" width="23" height="20"><path d="M1 6.8H4.6L9.2 2.4V17.2L4.6 12.8H1Z" fill="none" stroke="#fff" stroke-width="1.2" stroke-linejoin="round"/><g fill="none" stroke="#fff" stroke-width="1.1"><path d="M11.8 7C13.2 8.6 13.2 11 11.8 12.6"/><path d="M14.6 4.6C17.2 7.4 17.2 12.2 14.6 15"/><path d="M17.4 2.2C21.4 6.4 21.4 13.2 17.4 17.4"/></g></svg>
<svg class="a" style="left:1757px;top:1050px" width="21" height="22"><path d="M0.8 0.8H20V17H12.6L10.4 19.4L8.2 17H0.8Z" fill="none" stroke="#fff" stroke-width="1.3"/><path d="M4 5H17M4 8.6H17M4 12.2H12.6" stroke="#fff" stroke-width="1.1"/></svg>
<div class="t " style="left:1789.4px;top:1054px;font-size:14.5px;letter-spacing:-0.411px;color:#fff;">ENG</div>
<div class="t " style="left:1843.4px;top:1053px;font-size:14.5px;letter-spacing:-0.150px;color:#fff;">8:55 PM</div>
<div class="a " style="left:1914px;top:1042px;width:1px;height:38px;background:#4a4a4a"></div>
</body></html>
